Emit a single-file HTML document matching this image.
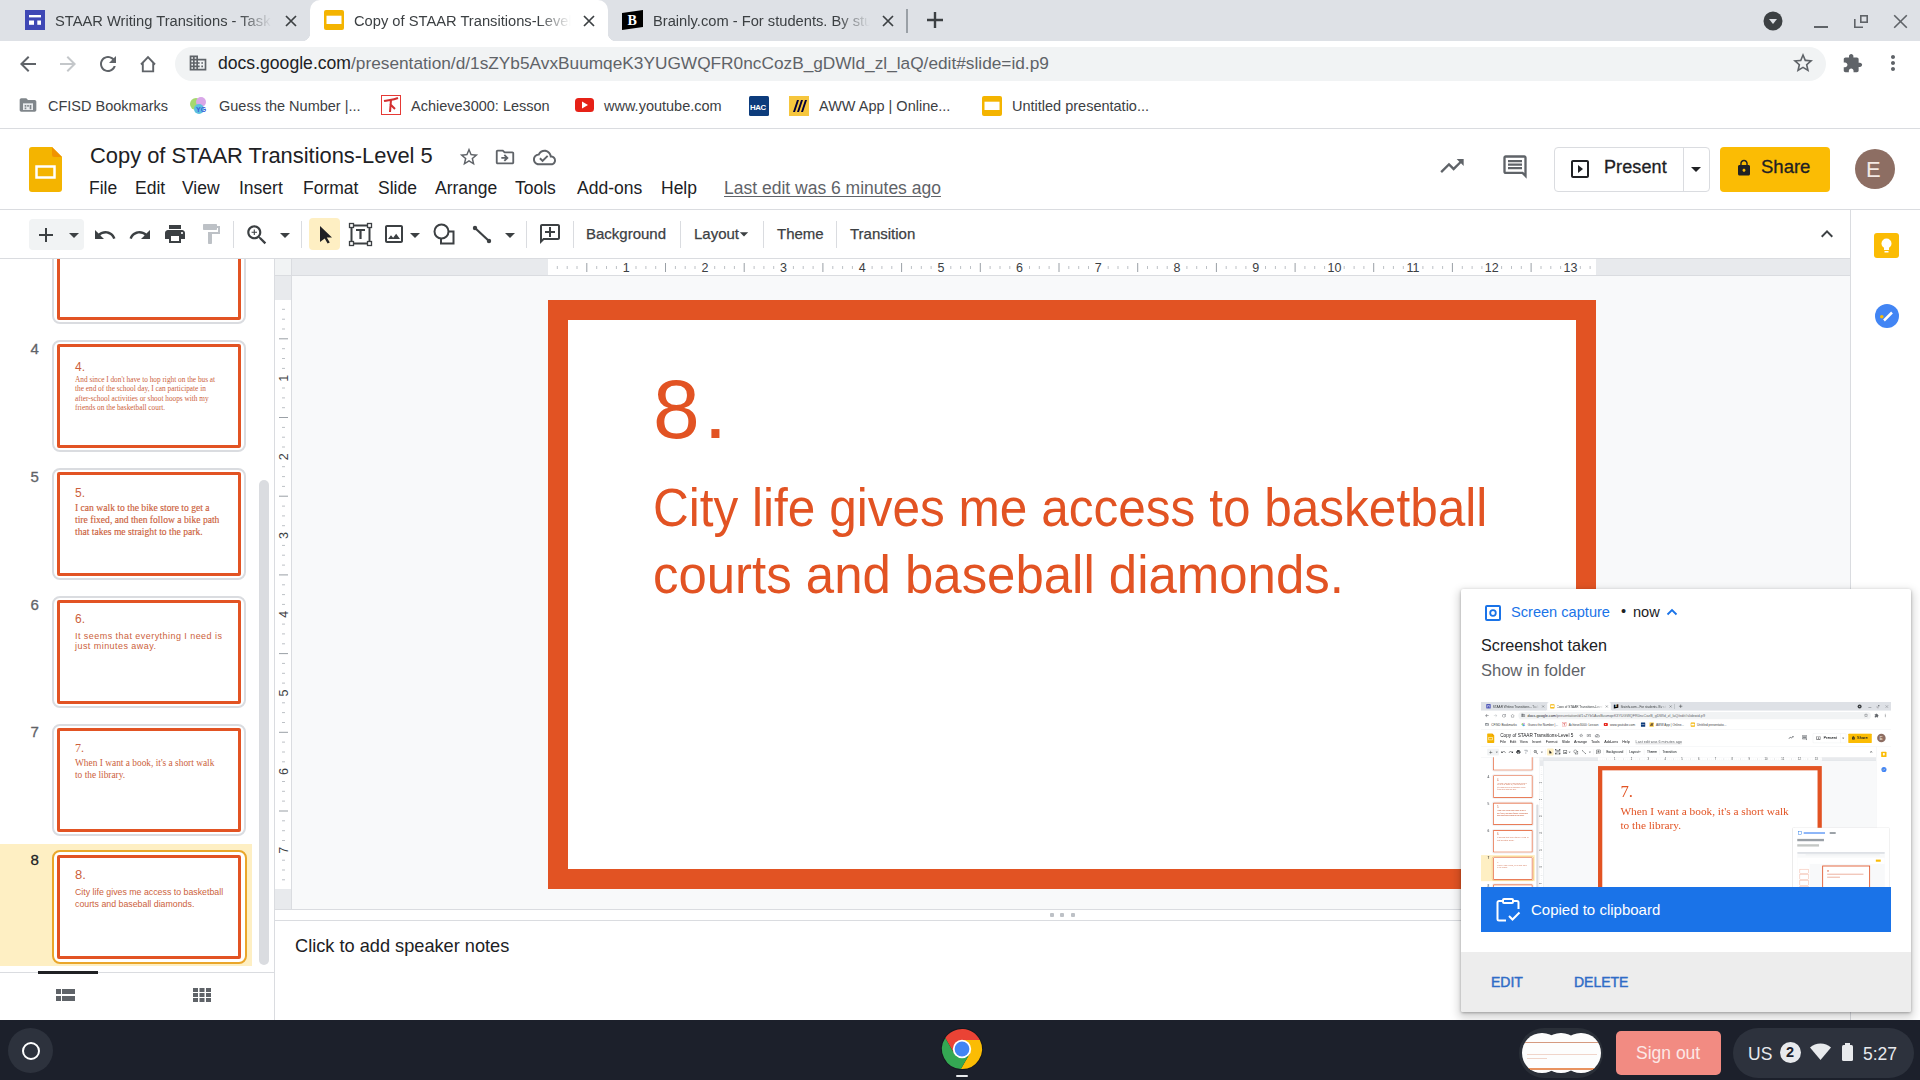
<!DOCTYPE html>
<html><head><meta charset="utf-8">
<style>
*{margin:0;padding:0;box-sizing:border-box}
html,body{width:1920px;height:1080px;overflow:hidden;background:#fff;font-family:"Liberation Sans",sans-serif;position:relative}
.a{position:absolute}
.t{position:absolute;white-space:nowrap;line-height:1}
svg{position:absolute;overflow:visible}
</style></head><body>

<!-- ===== Chrome tab strip ===== -->
<div class="a" style="left:0;top:0;width:1920px;height:41px;background:#dee1e6"></div>
<!-- active tab -->
<div class="a" style="left:310px;top:0;width:298px;height:41px;background:#fff;border-radius:10px 10px 0 0"></div>
<div class="a" style="left:302px;top:33px;width:8px;height:8px;background:radial-gradient(circle at 0 0,#dee1e6 8px,#fff 8.5px)"></div>
<div class="a" style="left:608px;top:33px;width:8px;height:8px;background:radial-gradient(circle at 100% 0,#dee1e6 8px,#fff 8.5px)"></div>

<!-- ===== Chrome toolbar ===== -->
<div class="a" style="left:0;top:41px;width:1920px;height:87px;background:#fff"></div>
<div class="a" style="left:175px;top:47px;width:1651px;height:34px;background:#f1f3f4;border-radius:17px"></div>
<div class="a" style="left:0;top:128px;width:1920px;height:1px;background:#dadce0"></div>
<!-- tab 1 -->
<svg style="left:25px;top:10px" width="20" height="20" viewBox="0 0 20 20"><rect width="20" height="20" fill="#3f48b5"/><rect x="4" y="5" width="12" height="2.4" fill="#fff"/><rect x="4" y="10.5" width="5" height="4.3" fill="#fff"/><rect x="12.3" y="10.5" width="3.7" height="4.3" fill="#fff"/></svg>
<div class="t" style="left:55px;top:14px;font-size:14.7px;color:#3c4043;width:217px;overflow:hidden;-webkit-mask-image:linear-gradient(90deg,#000 85%,transparent)">STAAR Writing Transitions - Task</div>
<svg style="left:284px;top:14px" width="14" height="14" viewBox="0 0 14 14"><path d="M2 2L12 12M12 2L2 12" stroke="#3c4043" stroke-width="1.7"/></svg>
<!-- tab 2 -->
<svg style="left:324px;top:10px" width="20" height="20" viewBox="0 0 20 20"><rect x="0" y="0" width="20" height="20" rx="2" fill="#f4b400"/><rect x="2.5" y="5.7" width="15" height="8.3" fill="#fff"/></svg>
<div class="t" style="left:354px;top:14px;font-size:14.7px;color:#3c4043;width:217px;overflow:hidden;-webkit-mask-image:linear-gradient(90deg,#000 85%,transparent)">Copy of STAAR Transitions-Level 5</div>
<svg style="left:582px;top:14px" width="14" height="14" viewBox="0 0 14 14"><path d="M2 2L12 12M12 2L2 12" stroke="#3c4043" stroke-width="1.7"/></svg>
<!-- tab 3 -->
<svg style="left:622px;top:10px" width="21" height="20" viewBox="0 0 21 20"><path d="M0 3L21 0V17L0 20Z" fill="#000"/><text x="5.5" y="15" font-family="Liberation Serif" font-weight="bold" font-size="14" fill="#fff">B</text></svg>
<div class="t" style="left:653px;top:14px;font-size:14.7px;color:#3c4043;width:217px;overflow:hidden;-webkit-mask-image:linear-gradient(90deg,#000 85%,transparent)">Brainly.com - For students. By students.</div>
<svg style="left:881px;top:14px" width="14" height="14" viewBox="0 0 14 14"><path d="M2 2L12 12M12 2L2 12" stroke="#3c4043" stroke-width="1.7"/></svg>
<div class="a" style="left:906px;top:9px;width:2px;height:24px;background:#9aa0a6"></div>
<svg style="left:925px;top:10px" width="20" height="20" viewBox="0 0 20 20"><path d="M10 2V18M2 10H18" stroke="#3c4043" stroke-width="2.4"/></svg>
<!-- window controls -->
<svg style="left:1763px;top:11px" width="20" height="20" viewBox="0 0 20 20"><circle cx="10" cy="10" r="9.5" fill="#3c4043"/><path d="M6 8H14L10 13Z" fill="#dee1e6"/></svg>
<div class="a" style="left:1813.5px;top:26px;width:14px;height:2px;background:#5f6368"></div>
<svg style="left:1852px;top:13px" width="18" height="18" viewBox="0 0 18 18"><rect x="8.8" y="2.8" width="6.4" height="6.4" fill="none" stroke="#5f6368" stroke-width="1.6"/><path d="M2.8 6V14.2H11" fill="none" stroke="#5f6368" stroke-width="1.6"/></svg>
<svg style="left:1893px;top:14px" width="15" height="15" viewBox="0 0 15 15"><path d="M1.2 1.2L13.8 13.8M13.8 1.2L1.2 13.8" stroke="#5f6368" stroke-width="1.6"/></svg>

<!-- nav buttons -->
<svg style="left:16px;top:52px" width="24" height="24" viewBox="0 0 24 24"><path fill="#5f6368" d="M20 11H7.83l5.59-5.59L12 4l-8 8 8 8 1.41-1.41L7.83 13H20v-2z"/></svg>
<svg style="left:56px;top:52px" width="24" height="24" viewBox="0 0 24 24"><path fill="#c4c7ca" d="M12 4l-1.41 1.41L16.17 11H4v2h12.17l-5.58 5.59L12 20l8-8z"/></svg>
<svg style="left:96px;top:52px" width="24" height="24" viewBox="0 0 24 24"><path fill="#5f6368" d="M17.65 6.35C16.2 4.9 14.21 4 12 4c-4.42 0-7.99 3.58-7.99 8s3.57 8 7.99 8c3.73 0 6.84-2.55 7.73-6h-2.08c-.82 2.33-3.04 4-5.65 4-3.31 0-6-2.69-6-6s2.69-6 6-6c1.66 0 3.14.69 4.22 1.78L13 11h7V4l-2.35 2.35z"/></svg>
<svg style="left:136px;top:52px" width="24" height="24" viewBox="0 0 24 24"><path d="M5 12.5L12 5.2L19 12.5M6.8 11V19.4H17.2V11" fill="none" stroke="#5f6368" stroke-width="1.9" stroke-linejoin="miter"/></svg>
<svg style="left:188px;top:53px" width="20" height="20" viewBox="0 0 24 24"><path fill="#5f6368" d="M12 7V3H2v18h20V7H12zM6 19H4v-2h2v2zm0-4H4v-2h2v2zm0-4H4V9h2v2zm0-4H4V5h2v2zm4 12H8v-2h2v2zm0-4H8v-2h2v2zm0-4H8V9h2v2zm0-4H8V5h2v2zm10 12h-8v-2h2v-2h-2v-2h2v-2h-2V9h8v10zm-2-8h-2v2h2v-2zm0 4h-2v2h2v-2z"/></svg>
<div class="t" style="left:218px;top:55px;font-size:17.6px;color:#5f6368"><span style="color:#202124">docs.google.com</span><span style="font-size:17.28px">/presentation/d/1sZYb5AvxBuumqeK3YUGWQFR0ncCozB_gDWld_zl_laQ/edit#slide=id.p9</span></div>
<svg style="left:1791px;top:51px" width="24" height="24" viewBox="0 0 24 24"><path fill="#5f6368" d="M22 9.24l-7.19-.62L12 2 9.19 8.63 2 9.24l5.46 4.73L5.82 21 12 17.27 18.18 21l-1.63-7.03L22 9.24zM12 15.4l-3.76 2.27 1-4.28-3.32-2.88 4.38-.38L12 6.1l1.71 4.04 4.38.38-3.32 2.88 1 4.28L12 15.4z"/></svg>
<svg style="left:1842px;top:53px" width="21" height="21" viewBox="0 0 24 24"><path fill="#5f6368" d="M20.5 11H19V7c0-1.1-.9-2-2-2h-4V3.5C13 2.12 11.88 1 10.5 1S8 2.12 8 3.5V5H4c-1.1 0-1.99.9-1.99 2v3.8H3.5c1.49 0 2.7 1.21 2.7 2.7s-1.21 2.7-2.7 2.7H2V20c0 1.1.9 2 2 2h3.8v-1.5c0-1.49 1.21-2.7 2.7-2.7 1.49 0 2.7 1.21 2.7 2.7V22H17c1.1 0 2-.9 2-2v-4h1.5c1.38 0 2.5-1.12 2.5-2.5S21.88 11 20.5 11z"/></svg>
<svg style="left:1881px;top:51px" width="24" height="24" viewBox="0 0 24 24"><path fill="#5f6368" d="M12 8c1.1 0 2-.9 2-2s-.9-2-2-2-2 .9-2 2 .9 2 2 2zm0 2c-1.1 0-2 .9-2 2s.9 2 2 2 2-.9 2-2-.9-2-2-2zm0 6c-1.1 0-2 .9-2 2s.9 2 2 2 2-.9 2-2-.9-2-2-2z"/></svg>

<!-- bookmarks -->
<svg style="left:18px;top:95px" width="20" height="20" viewBox="0 0 24 24"><path fill="#80868b" d="M10 4H4c-1.1 0-1.99.9-1.99 2L2 18c0 1.1.9 2 2 2h16c1.1 0 2-.9 2-2V8c0-1.1-.9-2-2-2h-8l-2-2z"/><rect x="6" y="10" width="12" height="8" fill="#e8eaed"/><path d="M8 12h2v2H8zM11 12h2v2h-2zM8 15h2v2H8zM14 12h2v5h-2z" fill="#80868b"/></svg>
<div class="t" style="left:48px;top:99px;font-size:14.5px;color:#3c4043">CFISD Bookmarks</div>
<svg style="left:188px;top:95px" width="22" height="20" viewBox="0 0 22 20"><circle cx="8" cy="9" r="6" fill="#a5d86e"/><circle cx="13" cy="7" r="5" fill="#d9a7e8"/><circle cx="11" cy="14" r="5" fill="#5bc0de"/><text x="8" y="17" font-size="7" font-weight="bold" fill="#3b5bdb" font-family="Liberation Sans">YG</text></svg>
<div class="t" style="left:219px;top:99px;font-size:14.5px;color:#3c4043">Guess the Number |...</div>
<svg style="left:381px;top:95px" width="20" height="20" viewBox="0 0 20 20"><rect x="0.5" y="0.5" width="19" height="19" fill="#fff" stroke="#e53935"/><path d="M3 6C7 5 12 5 17 3M10 5L9 17M9 9L14 14" stroke="#d32f2f" stroke-width="2" fill="none"/></svg>
<div class="t" style="left:411px;top:99px;font-size:14.5px;color:#3c4043">Achieve3000: Lesson</div>
<svg style="left:575px;top:98px" width="19" height="14" viewBox="0 0 19 14"><rect width="19" height="14" rx="3.5" fill="#e62117"/><path d="M7 3.5V10.5L13 7Z" fill="#fff"/></svg>
<div class="t" style="left:604px;top:99px;font-size:14.5px;color:#3c4043">www.youtube.com</div>
<svg style="left:749px;top:96px" width="20" height="20" viewBox="0 0 20 20"><rect width="20" height="20" rx="1.5" fill="#0d3c7c"/><text x="1" y="13.5" font-size="7.8" font-weight="bold" fill="#fff" font-family="Liberation Sans" letter-spacing="-0.4">HAC</text></svg>
<svg style="left:789px;top:96px" width="20" height="20" viewBox="0 0 20 20"><rect width="20" height="20" fill="#f6c63d"/><path d="M4 16L8 4H10L6 16ZM8 16L12 4H14L10 16ZM12 16L16 4H18L14 16Z" fill="#050038"/></svg>
<div class="t" style="left:819px;top:99px;font-size:14.5px;color:#3c4043">AWW App | Online...</div>
<svg style="left:982px;top:96px" width="20" height="20" viewBox="0 0 20 20"><rect x="0" y="0" width="20" height="20" rx="2" fill="#f4b400"/><rect x="2.5" y="5.7" width="15" height="8.3" fill="#fff"/></svg>
<div class="t" style="left:1012px;top:99px;font-size:14.5px;color:#3c4043">Untitled presentatio...</div>


<!-- ===== Docs header ===== -->
<div class="a" style="left:0;top:209px;width:1920px;height:1px;background:#dadce0"></div>

<!-- logo -->
<svg style="left:29px;top:147px" width="33" height="45" viewBox="0 0 33 45"><path d="M3 0H23L33 10V42a3 3 0 0 1-3 3H3a3 3 0 0 1-3-3V3a3 3 0 0 1 3-3Z" fill="#f4b400"/><path d="M23 0L33 10H25a2 2 0 0 1-2-2Z" fill="#f09300"/><rect x="7.5" y="19.5" width="18" height="11" fill="none" stroke="#fff" stroke-width="2.5"/></svg>
<div class="t" style="left:90px;top:145px;font-size:21.9px;color:#202124">Copy of STAAR Transitions-Level 5</div>
<svg style="left:458px;top:146px" width="22" height="22" viewBox="0 0 24 24"><path fill="#5f6368" d="M22 9.24l-7.19-.62L12 2 9.19 8.63 2 9.24l5.46 4.73L5.82 21 12 17.27 18.18 21l-1.63-7.03L22 9.24zM12 15.4l-3.76 2.27 1-4.28-3.32-2.88 4.38-.38L12 6.1l1.71 4.04 4.38.38-3.32 2.88 1 4.28L12 15.4z"/></svg>
<svg style="left:494px;top:146px" width="22" height="22" viewBox="0 0 24 24"><path fill="#5f6368" d="M20 6h-8l-2-2H4c-1.1 0-1.99.9-1.99 2L2 18c0 1.1.9 2 2 2h16c1.1 0 2-.9 2-2V8c0-1.1-.9-2-2-2zm0 12H4V6h5.17l2 2H20v10zm-7.84-6H8v2h4.16l-1.59 1.59L11.99 17 16 13.01 11.99 9l-1.41 1.41L12.16 12z"/></svg>
<svg style="left:533px;top:146px" width="23" height="23" viewBox="0 0 24 24"><path fill="#5f6368" d="M19.35 10.04C18.67 6.59 15.64 4 12 4 9.110 4 6.6 5.64 5.35 8.04 2.34 8.36 0 10.91 0 14c0 3.31 2.69 6 6 6h13c2.76 0 5-2.24 5-5 0-2.64-2.050-4.78-4.65-4.96zM19 18H6c-2.21 0-4-1.79-4-4 0-2.05 1.53-3.760 3.56-3.97l1.07-.11.5-.95C8.08 7.14 9.94 6 12 6c2.62 0 4.88 1.86 5.39 4.43l.3 1.5 1.53.11c1.56.1 2.78 1.41 2.78 2.96 0 1.65-1.35 3-3 3zm-9-3.82l-2.09-2.09L6.5 13.5 10 17l6.01-6.01-1.41-1.41z"/></svg>
<div class="t" style="left:89px;top:180px;font-size:17.5px;color:#202124">File</div>
<div class="t" style="left:135px;top:180px;font-size:17.5px;color:#202124">Edit</div>
<div class="t" style="left:182px;top:180px;font-size:17.5px;color:#202124">View</div>
<div class="t" style="left:239px;top:180px;font-size:17.5px;color:#202124">Insert</div>
<div class="t" style="left:303px;top:180px;font-size:17.5px;color:#202124">Format</div>
<div class="t" style="left:378px;top:180px;font-size:17.5px;color:#202124">Slide</div>
<div class="t" style="left:435px;top:180px;font-size:17.5px;color:#202124">Arrange</div>
<div class="t" style="left:515px;top:180px;font-size:17.5px;color:#202124">Tools</div>
<div class="t" style="left:577px;top:180px;font-size:17.5px;color:#202124">Add-ons</div>
<div class="t" style="left:661px;top:180px;font-size:17.5px;color:#202124">Help</div>
<div class="t" style="left:724px;top:180px;font-size:17.5px;color:#5f6368;text-decoration:underline;text-underline-offset:1.5px">Last edit was 6 minutes ago</div>
<!-- right header -->
<svg style="left:1438px;top:152px" width="28" height="28" viewBox="0 0 24 24"><path fill="#5f6368" d="M16 6l2.29 2.29-4.88 4.88-4-4L2 16.59 3.41 18l6-6 4 4 6.3-6.29L22 12V6z"/></svg>
<svg style="left:1501px;top:153px" width="28" height="28" viewBox="0 0 24 24"><path fill="#5f6368" d="M21.99 4c0-1.1-.89-2-1.99-2H4c-1.1 0-2 .9-2 2v12c0 1.1.9 2 2 2h14l4 4-.01-18zM20 4v13.170L18.83 16H4V4h16zM6 12h12v2H6zm0-3h12v2H6zm0-3h12v2H6z"/></svg>
<div class="a" style="left:1554px;top:147px;width:156px;height:45px;border:1px solid #dadce0;border-radius:4px;background:#fff"></div>
<div class="a" style="left:1683px;top:148px;width:1px;height:43px;background:#dadce0"></div>
<svg style="left:1568px;top:157px" width="24" height="24" viewBox="0 0 24 24"><path fill="#202124" d="M10 8v8l5-4-5-4zm9-5H5c-1.1 0-2 .9-2 2v14c0 1.1.9 2 2 2h14c1.1 0 2-.9 2-2V5c0-1.1-.9-2-2-2zm0 16H5V5h14v14z"/></svg>
<div class="t" style="left:1604px;top:158px;font-size:18px;color:#202124;letter-spacing:0.1px;-webkit-text-stroke:0.3px #202124">Present</div>
<svg style="left:1684px;top:157px" width="24" height="24" viewBox="0 0 24 24"><path fill="#202124" d="M7 10l5 5 5-5z"/></svg>
<div class="a" style="left:1720px;top:147px;width:110px;height:45px;background:#fbbc04;border-radius:4px"></div>
<svg style="left:1735px;top:159px" width="18" height="18" viewBox="0 0 24 24"><path fill="#202124" d="M18 8h-1V6c0-2.76-2.24-5-5-5S7 3.24 7 6v2H6c-1.1 0-2 .9-2 2v10c0 1.1.9 2 2 2h12c1.100 0 2-.9 2-2V10c0-1.1-.9-2-2-2zm-6 9c-1.1 0-2-.9-2-2s.9-2 2-2 2 .9 2 2-.9 2-2 2zm3.1-9H8.9V6c0-1.71 1.39-3.1 3.1-3.1 1.71 0 3.1 1.39 3.1 3.1v2z"/></svg>
<div class="t" style="left:1761px;top:158px;font-size:18.5px;color:#202124;-webkit-text-stroke:0.3px #202124">Share</div>
<div class="a" style="left:1855px;top:149px;width:40px;height:40px;border-radius:50%;background:#8d6e63"></div>
<div class="t" style="left:1866px;top:159px;font-size:22px;color:#f3e9e4">E</div>

<!-- ===== Docs toolbar ===== -->
<div class="a" style="left:29px;top:219px;width:55px;height:31px;background:#f1f3f4;border-radius:4px"></div>
<svg style="left:34px;top:223px" width="24" height="24" viewBox="0 0 24 24"><path fill="#3c4043" d="M19 13h-6v6h-2v-6H5v-2h6V5h2v6h6v2z"/></svg>
<svg style="left:62px;top:223px" width="24" height="24" viewBox="0 0 24 24"><path fill="#3c4043" d="M7 10l5 5 5-5z"/></svg>
<svg style="left:93px;top:223px" width="24" height="24" viewBox="0 0 24 24"><path fill="#3c4043" d="M12.5 8c-2.65 0-5.05.99-6.9 2.6L2 7v9h9l-3.62-3.62c1.39-1.16 3.16-1.88 5.12-1.88 3.54 0 6.55 2.31 7.6 5.5l2.37-.78C21.08 11.03 17.15 8 12.5 8z"/></svg>
<svg style="left:128px;top:223px" width="24" height="24" viewBox="0 0 24 24"><path fill="#3c4043" d="M18.4 10.6C16.55 8.99 14.15 8 11.5 8c-4.65 0-8.58 3.03-9.96 7.22L3.9 16c1.05-3.19 4.05-5.5 7.6-5.5 1.95 0 3.73.72 5.12 1.880L13 16h9V7l-3.6 3.6z"/></svg>
<svg style="left:163px;top:222px" width="24" height="24" viewBox="0 0 24 24"><path fill="#3c4043" d="M19 8H5c-1.66 0-3 1.34-3 3v6h4v4h12v-4h4v-6c0-1.66-1.34-3-3-3zm-3 11H8v-5h8v5zm3-7c-.55 0-1-.45-1-1s.45-1 1-1 1 .45 1 1-.45 1-1 1zm-1-9H6v4h12V3z"/></svg>
<svg style="left:199px;top:222px" width="24" height="24" viewBox="0 0 24 24"><path fill="#bdc1c6" d="M18 4V3c0-.55-.45-1-1-1H5c-.55 0-1 .45-1 1v4c0 .55.45 1 1 1h12c.55 0 1-.45 1-1V6h1v4H9v11c0 .55.45 1 1 1h2c.55 0 1-.45 1-1v-9h8V4h-3z"/></svg>
<div class="a" style="left:233px;top:221px;width:1px;height:27px;background:#dadce0"></div>
<svg style="left:244px;top:222px" width="26" height="26" viewBox="0 0 24 24"><path fill="#3c4043" d="M15.5 14h-.79l-.28-.27C15.41 12.59 16 11.11 16 9.5 16 5.91 13.09 3 9.5 3S3 5.910 3 9.5 5.91 16 9.5 16c1.61 0 3.09-.59 4.23-1.57l.27.28v.79l5 4.99L20.49 19l-4.99-5zm-6 0C7.01 14 5 11.99 5 9.5S7.01 5 9.5 5 14 7.01 14 9.5 11.99 14 9.5 14zm2.5-4h-2v2H9v-2H7V9h2V7h1v2h2v1z"/></svg>
<svg style="left:273px;top:223px" width="24" height="24" viewBox="0 0 24 24"><path fill="#3c4043" d="M7 10l5 5 5-5z"/></svg>
<div class="a" style="left:301px;top:221px;width:1px;height:27px;background:#dadce0"></div>
<div class="a" style="left:309px;top:218px;width:31px;height:32px;background:#feefc3;border-radius:4px"></div>
<svg style="left:318px;top:225px" width="16" height="19" viewBox="0 0 16 19"><path d="M2 1L14 12.5H8.8L11.8 17.5L9.6 18.6L6.7 13.5L2 17Z" fill="#202124"/></svg>
<svg style="left:349px;top:223px" width="23" height="23" viewBox="0 0 23 23"><rect x="2.5" y="2.5" width="18" height="18" fill="none" stroke="#3c4043" stroke-width="2"/><rect x="0.5" y="0.5" width="4" height="4" fill="#fff" stroke="#3c4043" stroke-width="1.3"/><rect x="18.5" y="0.5" width="4" height="4" fill="#fff" stroke="#3c4043" stroke-width="1.3"/><rect x="0.5" y="18.5" width="4" height="4" fill="#fff" stroke="#3c4043" stroke-width="1.3"/><rect x="18.5" y="18.5" width="4" height="4" fill="#fff" stroke="#3c4043" stroke-width="1.3"/><path d="M7 7H16M11.5 7V16" stroke="#3c4043" stroke-width="2.2"/></svg>
<svg style="left:382px;top:222px" width="24" height="24" viewBox="0 0 24 24"><path fill="#3c4043" d="M19 5v14H5V5h14m0-2H5c-1.1 0-2 .9-2 2v14c0 1.1.9 2 2 2h14c1.1 0 2-.9 2-2V5c0-1.1-.9-2-2-2zm-4.86 8.86l-3 3.87L9 13.14 6 17h12l-3.86-5.14z"/></svg>
<svg style="left:403px;top:223px" width="24" height="24" viewBox="0 0 24 24"><path fill="#3c4043" d="M7 10l5 5 5-5z"/></svg>
<svg style="left:433px;top:223px" width="22" height="22" viewBox="0 0 22 22"><rect x="8" y="8.5" width="12.5" height="12" fill="none" stroke="#3c4043" stroke-width="2"/><circle cx="8.5" cy="8.5" r="7" fill="#fff" stroke="#3c4043" stroke-width="2"/></svg>
<svg style="left:472px;top:225px" width="20" height="19" viewBox="0 0 20 19"><path d="M3 3L17 16" stroke="#3c4043" stroke-width="2.2"/><circle cx="3" cy="3" r="2.2" fill="#3c4043"/><circle cx="17" cy="16" r="2.2" fill="#3c4043"/></svg>
<svg style="left:498px;top:223px" width="24" height="24" viewBox="0 0 24 24"><path fill="#3c4043" d="M7 10l5 5 5-5z"/></svg>
<div class="a" style="left:526px;top:221px;width:1px;height:27px;background:#dadce0"></div>
<svg style="left:538px;top:222px" width="24" height="24" viewBox="0 0 24 24"><path fill="#3c4043" d="M22 4c0-1.1-.9-2-2-2H4c-1.1 0-1.99.9-1.99 2L2 16c0 1.1.9 2 2 2h14l4 4V4zm-2 13.17L18.83 16H4V4h16v13.17zM13 5h-2v4H7v2h4v4h2v-4h4V9h-4z" transform="translate(24,0) scale(-1,1)"/></svg>
<div class="a" style="left:573px;top:221px;width:1px;height:27px;background:#dadce0"></div>
<div class="t" style="left:586px;top:226px;font-size:15px;color:#3c4043;-webkit-text-stroke:0.25px #3c4043">Background</div>
<div class="a" style="left:680px;top:221px;width:1px;height:27px;background:#dadce0"></div>
<div class="t" style="left:694px;top:226px;font-size:15px;color:#3c4043;-webkit-text-stroke:0.25px #3c4043">Layout</div>
<svg style="left:734px;top:224px" width="20" height="20" viewBox="0 0 24 24"><path fill="#3c4043" d="M7 10l5 5 5-5z"/></svg>
<div class="a" style="left:763px;top:221px;width:1px;height:27px;background:#dadce0"></div>
<div class="t" style="left:777px;top:226px;font-size:15px;color:#3c4043;-webkit-text-stroke:0.25px #3c4043">Theme</div>
<div class="a" style="left:836px;top:221px;width:1px;height:27px;background:#dadce0"></div>
<div class="t" style="left:850px;top:226px;font-size:15px;color:#3c4043;-webkit-text-stroke:0.25px #3c4043">Transition</div>
<svg style="left:1815px;top:222px" width="24" height="24" viewBox="0 0 24 24"><path fill="#3c4043" d="M12 8l-6 6 1.41 1.41L12 10.83l4.59 4.58L18 14z"/></svg>
<div class="a" style="left:0;top:258px;width:1850px;height:1px;background:#dadce0"></div>

<!-- ===== Filmstrip ===== -->
<div class="a" style="left:0;top:259px;width:274px;height:761px;overflow:hidden"><div class="a" style="left:0;top:-259px;width:274px;height:1080px"><div class="a" style="left:0;top:844.3px;width:252px;height:122px;background:#feefc3"></div>
<div class="a" style="left:52px;top:212px;width:194px;height:112px;border:2px solid #dadce0;border-radius:8px;background:#fff"></div>
<div class="a" style="left:57px;top:216px;width:184px;height:104px;border:3.5px solid #e25323;border-radius:2px;background:#fff"></div>
<div class="a" style="left:52px;top:340px;width:194px;height:112px;border:2px solid #dadce0;border-radius:8px;background:#fff"></div>
<div class="a" style="left:57px;top:344px;width:184px;height:104px;border:3.5px solid #e25323;border-radius:2px;background:#fff"></div>
<div class="t" style="left:30.5px;top:340.5px;font-size:15px;color:#5f6368;-webkit-text-stroke:0.3px #5f6368">4</div>
<div class="a" style="left:52px;top:468px;width:194px;height:112px;border:2px solid #dadce0;border-radius:8px;background:#fff"></div>
<div class="a" style="left:57px;top:472px;width:184px;height:104px;border:3.5px solid #e25323;border-radius:2px;background:#fff"></div>
<div class="t" style="left:30.5px;top:468.5px;font-size:15px;color:#5f6368;-webkit-text-stroke:0.3px #5f6368">5</div>
<div class="a" style="left:52px;top:596px;width:194px;height:112px;border:2px solid #dadce0;border-radius:8px;background:#fff"></div>
<div class="a" style="left:57px;top:600px;width:184px;height:104px;border:3.5px solid #e25323;border-radius:2px;background:#fff"></div>
<div class="t" style="left:30.5px;top:596.5px;font-size:15px;color:#5f6368;-webkit-text-stroke:0.3px #5f6368">6</div>
<div class="a" style="left:52px;top:723.5px;width:194px;height:112px;border:2px solid #dadce0;border-radius:8px;background:#fff"></div>
<div class="a" style="left:57px;top:727.5px;width:184px;height:104px;border:3.5px solid #e25323;border-radius:2px;background:#fff"></div>
<div class="t" style="left:30.5px;top:724.0px;font-size:15px;color:#5f6368;-webkit-text-stroke:0.3px #5f6368">7</div>
<div class="a" style="left:51.5px;top:850.3px;width:195px;height:114px;border:2px solid #eaa62a;border-radius:8px;background:#fff"></div>
<div class="a" style="left:57px;top:855.3px;width:184px;height:104px;border:3.5px solid #e25323;border-radius:2px;background:#fff"></div>
<div class="t" style="left:30.5px;top:851.8px;font-size:15px;color:#202124;-webkit-text-stroke:0.3px #202124">8</div>
<div class="t" style="left:75px;top:361px;font-size:12px;color:#cc5f3c;font-family:'Liberation Sans'">4.</div>
<div class="t" style="left:75px;top:375px;font-size:7.3px;line-height:9.4px;color:#cc5f3c;font-family:'Liberation Serif'">And since I don't have to hop right on the bus at<br>the end of the school day, I can participate in<br>after-school activities or shoot hoops with my<br>friends on the basketball court.</div>
<div class="t" style="left:75px;top:487px;font-size:12px;color:#cc5f3c">5.</div>
<div class="t" style="left:75px;top:502px;font-size:9.6px;line-height:12px;color:#cc5f3c;font-family:'Liberation Serif';-webkit-text-stroke:0.15px #cc5f3c">I can walk to the bike store to get a<br>tire fixed, and then follow a bike path<br>that takes me straight to the park.</div>
<div class="t" style="left:75px;top:613px;font-size:12px;color:#cc5f3c">6.</div>
<div class="t" style="left:75px;top:632px;font-size:9px;line-height:9.5px;color:#cc5f3c;letter-spacing:0.45px">It seems that everything I need is<br>just minutes away.</div>
<div class="t" style="left:75px;top:742px;font-size:12px;color:#cc5f3c;font-family:'Liberation Serif'">7.</div>
<div class="t" style="left:75px;top:757px;font-size:9.4px;line-height:12.4px;color:#cc5f3c;font-family:'Liberation Serif'">When I want a book, it's a short walk<br>to the library.</div>
<div class="t" style="left:75px;top:868px;font-size:13px;color:#cc5f3c">8.</div>
<div class="t" style="left:75px;top:886px;font-size:8.8px;line-height:12.3px;color:#cc5f3c">City life gives me access to basketball<br>courts and baseball diamonds.</div>
<div class="a" style="left:259px;top:480px;width:10px;height:485px;background:#dadce0;border-radius:5px"></div>
<div class="a" style="left:0;top:972px;width:274px;height:48px;background:#fff;border-top:1px solid #dadce0"></div>
<div class="a" style="left:38px;top:971px;width:60px;height:3px;background:#202124"></div>
<svg style="left:55px;top:986px" width="21" height="18" viewBox="0 0 21 18"><rect x="1" y="3" width="5" height="5" fill="#5f6368"/><rect x="7" y="3" width="13" height="5" fill="#5f6368"/><rect x="1" y="10" width="5" height="5" fill="#5f6368"/><rect x="7" y="10" width="13" height="5" fill="#5f6368"/></svg>
<svg style="left:192px;top:986px" width="20" height="18" viewBox="0 0 20 18"><g fill="#5f6368"><rect x="1" y="2" width="5" height="4"/><rect x="7.5" y="2" width="5" height="4"/><rect x="14" y="2" width="5" height="4"/><rect x="1" y="7" width="5" height="4"/><rect x="7.5" y="7" width="5" height="4"/><rect x="14" y="7" width="5" height="4"/><rect x="1" y="12" width="5" height="4"/><rect x="7.5" y="12" width="5" height="4"/><rect x="14" y="12" width="5" height="4"/></g></svg></div></div>

<div class="a" style="left:274px;top:259px;width:1px;height:761px;background:#dadce0"></div>


<!-- ===== Canvas ===== -->
<div class="a" style="left:275px;top:259px;width:1575px;height:650px;background:#f8f9fa"></div>
<div class="a" style="left:275px;top:259px;width:1575px;height:17px;background:#e8eaed;border-bottom:1px solid #dadce0"></div>
<div class="a" style="left:548px;top:259px;width:1048px;height:17px;background:#fff;border-bottom:1px solid #dadce0"></div>
<div class="a" style="left:275px;top:276px;width:17px;height:633px;background:#e8eaed;border-right:1px solid #dadce0"></div>
<div class="a" style="left:275px;top:300px;width:17px;height:589px;background:#fff;border-right:1px solid #dadce0"></div>
<div class="a" style="left:275px;top:259px;width:17px;height:17px;background:#f1f3f4;border-right:1px solid #dadce0;border-bottom:1px solid #dadce0"></div>
<svg style="left:0;top:0" width="1920" height="1080">
<rect x="556.8" y="266" width="1" height="3" fill="#bdc1c6"/>
<rect x="566.7" y="266" width="1" height="3" fill="#bdc1c6"/>
<rect x="576.5" y="266" width="1" height="3" fill="#bdc1c6"/>
<rect x="586.3" y="263" width="1" height="9" fill="#9aa0a6"/>
<rect x="596.2" y="266" width="1" height="3" fill="#bdc1c6"/>
<rect x="606.0" y="266" width="1" height="3" fill="#bdc1c6"/>
<rect x="615.9" y="266" width="1" height="3" fill="#bdc1c6"/>
<text x="626.2" y="271.5" font-size="12.5" fill="#3c4043" text-anchor="middle" font-family="Liberation Sans">1</text>
<rect x="635.5" y="266" width="1" height="3" fill="#bdc1c6"/>
<rect x="645.4" y="266" width="1" height="3" fill="#bdc1c6"/>
<rect x="655.2" y="266" width="1" height="3" fill="#bdc1c6"/>
<rect x="665.0" y="263" width="1" height="9" fill="#9aa0a6"/>
<rect x="674.9" y="266" width="1" height="3" fill="#bdc1c6"/>
<rect x="684.7" y="266" width="1" height="3" fill="#bdc1c6"/>
<rect x="694.5" y="266" width="1" height="3" fill="#bdc1c6"/>
<text x="704.9" y="271.5" font-size="12.5" fill="#3c4043" text-anchor="middle" font-family="Liberation Sans">2</text>
<rect x="714.2" y="266" width="1" height="3" fill="#bdc1c6"/>
<rect x="724.1" y="266" width="1" height="3" fill="#bdc1c6"/>
<rect x="733.9" y="266" width="1" height="3" fill="#bdc1c6"/>
<rect x="743.7" y="263" width="1" height="9" fill="#9aa0a6"/>
<rect x="753.6" y="266" width="1" height="3" fill="#bdc1c6"/>
<rect x="763.4" y="266" width="1" height="3" fill="#bdc1c6"/>
<rect x="773.2" y="266" width="1" height="3" fill="#bdc1c6"/>
<text x="783.6" y="271.5" font-size="12.5" fill="#3c4043" text-anchor="middle" font-family="Liberation Sans">3</text>
<rect x="792.9" y="266" width="1" height="3" fill="#bdc1c6"/>
<rect x="802.7" y="266" width="1" height="3" fill="#bdc1c6"/>
<rect x="812.6" y="266" width="1" height="3" fill="#bdc1c6"/>
<rect x="822.4" y="263" width="1" height="9" fill="#9aa0a6"/>
<rect x="832.3" y="266" width="1" height="3" fill="#bdc1c6"/>
<rect x="842.1" y="266" width="1" height="3" fill="#bdc1c6"/>
<rect x="851.9" y="266" width="1" height="3" fill="#bdc1c6"/>
<text x="862.3" y="271.5" font-size="12.5" fill="#3c4043" text-anchor="middle" font-family="Liberation Sans">4</text>
<rect x="871.6" y="266" width="1" height="3" fill="#bdc1c6"/>
<rect x="881.4" y="266" width="1" height="3" fill="#bdc1c6"/>
<rect x="891.3" y="266" width="1" height="3" fill="#bdc1c6"/>
<rect x="901.1" y="263" width="1" height="9" fill="#9aa0a6"/>
<rect x="910.9" y="266" width="1" height="3" fill="#bdc1c6"/>
<rect x="920.8" y="266" width="1" height="3" fill="#bdc1c6"/>
<rect x="930.6" y="266" width="1" height="3" fill="#bdc1c6"/>
<text x="941.0" y="271.5" font-size="12.5" fill="#3c4043" text-anchor="middle" font-family="Liberation Sans">5</text>
<rect x="950.3" y="266" width="1" height="3" fill="#bdc1c6"/>
<rect x="960.1" y="266" width="1" height="3" fill="#bdc1c6"/>
<rect x="970.0" y="266" width="1" height="3" fill="#bdc1c6"/>
<rect x="979.8" y="263" width="1" height="9" fill="#9aa0a6"/>
<rect x="989.6" y="266" width="1" height="3" fill="#bdc1c6"/>
<rect x="999.5" y="266" width="1" height="3" fill="#bdc1c6"/>
<rect x="1009.3" y="266" width="1" height="3" fill="#bdc1c6"/>
<text x="1019.6" y="271.5" font-size="12.5" fill="#3c4043" text-anchor="middle" font-family="Liberation Sans">6</text>
<rect x="1029.0" y="266" width="1" height="3" fill="#bdc1c6"/>
<rect x="1038.8" y="266" width="1" height="3" fill="#bdc1c6"/>
<rect x="1048.6" y="266" width="1" height="3" fill="#bdc1c6"/>
<rect x="1058.5" y="263" width="1" height="9" fill="#9aa0a6"/>
<rect x="1068.3" y="266" width="1" height="3" fill="#bdc1c6"/>
<rect x="1078.2" y="266" width="1" height="3" fill="#bdc1c6"/>
<rect x="1088.0" y="266" width="1" height="3" fill="#bdc1c6"/>
<text x="1098.3" y="271.5" font-size="12.5" fill="#3c4043" text-anchor="middle" font-family="Liberation Sans">7</text>
<rect x="1107.7" y="266" width="1" height="3" fill="#bdc1c6"/>
<rect x="1117.5" y="266" width="1" height="3" fill="#bdc1c6"/>
<rect x="1127.3" y="266" width="1" height="3" fill="#bdc1c6"/>
<rect x="1137.2" y="263" width="1" height="9" fill="#9aa0a6"/>
<rect x="1147.0" y="266" width="1" height="3" fill="#bdc1c6"/>
<rect x="1156.8" y="266" width="1" height="3" fill="#bdc1c6"/>
<rect x="1166.7" y="266" width="1" height="3" fill="#bdc1c6"/>
<text x="1177.0" y="271.5" font-size="12.5" fill="#3c4043" text-anchor="middle" font-family="Liberation Sans">8</text>
<rect x="1186.4" y="266" width="1" height="3" fill="#bdc1c6"/>
<rect x="1196.2" y="266" width="1" height="3" fill="#bdc1c6"/>
<rect x="1206.0" y="266" width="1" height="3" fill="#bdc1c6"/>
<rect x="1215.9" y="263" width="1" height="9" fill="#9aa0a6"/>
<rect x="1225.7" y="266" width="1" height="3" fill="#bdc1c6"/>
<rect x="1235.5" y="266" width="1" height="3" fill="#bdc1c6"/>
<rect x="1245.4" y="266" width="1" height="3" fill="#bdc1c6"/>
<text x="1255.7" y="271.5" font-size="12.5" fill="#3c4043" text-anchor="middle" font-family="Liberation Sans">9</text>
<rect x="1265.0" y="266" width="1" height="3" fill="#bdc1c6"/>
<rect x="1274.9" y="266" width="1" height="3" fill="#bdc1c6"/>
<rect x="1284.7" y="266" width="1" height="3" fill="#bdc1c6"/>
<rect x="1294.6" y="263" width="1" height="9" fill="#9aa0a6"/>
<rect x="1304.4" y="266" width="1" height="3" fill="#bdc1c6"/>
<rect x="1314.2" y="266" width="1" height="3" fill="#bdc1c6"/>
<rect x="1324.1" y="266" width="1" height="3" fill="#bdc1c6"/>
<text x="1334.4" y="271.5" font-size="12.5" fill="#3c4043" text-anchor="middle" font-family="Liberation Sans">10</text>
<rect x="1343.7" y="266" width="1" height="3" fill="#bdc1c6"/>
<rect x="1353.6" y="266" width="1" height="3" fill="#bdc1c6"/>
<rect x="1363.4" y="266" width="1" height="3" fill="#bdc1c6"/>
<rect x="1373.2" y="263" width="1" height="9" fill="#9aa0a6"/>
<rect x="1383.1" y="266" width="1" height="3" fill="#bdc1c6"/>
<rect x="1392.9" y="266" width="1" height="3" fill="#bdc1c6"/>
<rect x="1402.8" y="266" width="1" height="3" fill="#bdc1c6"/>
<text x="1413.1" y="271.5" font-size="12.5" fill="#3c4043" text-anchor="middle" font-family="Liberation Sans">11</text>
<rect x="1422.4" y="266" width="1" height="3" fill="#bdc1c6"/>
<rect x="1432.3" y="266" width="1" height="3" fill="#bdc1c6"/>
<rect x="1442.1" y="266" width="1" height="3" fill="#bdc1c6"/>
<rect x="1451.9" y="263" width="1" height="9" fill="#9aa0a6"/>
<rect x="1461.8" y="266" width="1" height="3" fill="#bdc1c6"/>
<rect x="1471.6" y="266" width="1" height="3" fill="#bdc1c6"/>
<rect x="1481.4" y="266" width="1" height="3" fill="#bdc1c6"/>
<text x="1491.8" y="271.5" font-size="12.5" fill="#3c4043" text-anchor="middle" font-family="Liberation Sans">12</text>
<rect x="1501.1" y="266" width="1" height="3" fill="#bdc1c6"/>
<rect x="1511.0" y="266" width="1" height="3" fill="#bdc1c6"/>
<rect x="1520.8" y="266" width="1" height="3" fill="#bdc1c6"/>
<rect x="1530.6" y="263" width="1" height="9" fill="#9aa0a6"/>
<rect x="1540.5" y="266" width="1" height="3" fill="#bdc1c6"/>
<rect x="1550.3" y="266" width="1" height="3" fill="#bdc1c6"/>
<rect x="1560.1" y="266" width="1" height="3" fill="#bdc1c6"/>
<text x="1570.5" y="271.5" font-size="12.5" fill="#3c4043" text-anchor="middle" font-family="Liberation Sans">13</text>
<rect x="1579.8" y="266" width="1" height="3" fill="#bdc1c6"/>
<rect x="1589.6" y="266" width="1" height="3" fill="#bdc1c6"/>
<rect x="282" y="308.8" width="3" height="1" fill="#bdc1c6"/>
<rect x="282" y="318.7" width="3" height="1" fill="#bdc1c6"/>
<rect x="282" y="328.5" width="3" height="1" fill="#bdc1c6"/>
<rect x="279" y="338.3" width="9" height="1" fill="#9aa0a6"/>
<rect x="282" y="348.2" width="3" height="1" fill="#bdc1c6"/>
<rect x="282" y="358.0" width="3" height="1" fill="#bdc1c6"/>
<rect x="282" y="367.9" width="3" height="1" fill="#bdc1c6"/>
<text x="0" y="0" font-size="12.5" fill="#3c4043" text-anchor="middle" font-family="Liberation Sans" transform="translate(287.5,378.2) rotate(-90)">1</text>
<rect x="282" y="387.5" width="3" height="1" fill="#bdc1c6"/>
<rect x="282" y="397.4" width="3" height="1" fill="#bdc1c6"/>
<rect x="282" y="407.2" width="3" height="1" fill="#bdc1c6"/>
<rect x="279" y="417.0" width="9" height="1" fill="#9aa0a6"/>
<rect x="282" y="426.9" width="3" height="1" fill="#bdc1c6"/>
<rect x="282" y="436.7" width="3" height="1" fill="#bdc1c6"/>
<rect x="282" y="446.5" width="3" height="1" fill="#bdc1c6"/>
<text x="0" y="0" font-size="12.5" fill="#3c4043" text-anchor="middle" font-family="Liberation Sans" transform="translate(287.5,456.9) rotate(-90)">2</text>
<rect x="282" y="466.2" width="3" height="1" fill="#bdc1c6"/>
<rect x="282" y="476.1" width="3" height="1" fill="#bdc1c6"/>
<rect x="282" y="485.9" width="3" height="1" fill="#bdc1c6"/>
<rect x="279" y="495.7" width="9" height="1" fill="#9aa0a6"/>
<rect x="282" y="505.6" width="3" height="1" fill="#bdc1c6"/>
<rect x="282" y="515.4" width="3" height="1" fill="#bdc1c6"/>
<rect x="282" y="525.2" width="3" height="1" fill="#bdc1c6"/>
<text x="0" y="0" font-size="12.5" fill="#3c4043" text-anchor="middle" font-family="Liberation Sans" transform="translate(287.5,535.6) rotate(-90)">3</text>
<rect x="282" y="544.9" width="3" height="1" fill="#bdc1c6"/>
<rect x="282" y="554.7" width="3" height="1" fill="#bdc1c6"/>
<rect x="282" y="564.6" width="3" height="1" fill="#bdc1c6"/>
<rect x="279" y="574.4" width="9" height="1" fill="#9aa0a6"/>
<rect x="282" y="584.3" width="3" height="1" fill="#bdc1c6"/>
<rect x="282" y="594.1" width="3" height="1" fill="#bdc1c6"/>
<rect x="282" y="603.9" width="3" height="1" fill="#bdc1c6"/>
<text x="0" y="0" font-size="12.5" fill="#3c4043" text-anchor="middle" font-family="Liberation Sans" transform="translate(287.5,614.3) rotate(-90)">4</text>
<rect x="282" y="623.6" width="3" height="1" fill="#bdc1c6"/>
<rect x="282" y="633.4" width="3" height="1" fill="#bdc1c6"/>
<rect x="282" y="643.3" width="3" height="1" fill="#bdc1c6"/>
<rect x="279" y="653.1" width="9" height="1" fill="#9aa0a6"/>
<rect x="282" y="662.9" width="3" height="1" fill="#bdc1c6"/>
<rect x="282" y="672.8" width="3" height="1" fill="#bdc1c6"/>
<rect x="282" y="682.6" width="3" height="1" fill="#bdc1c6"/>
<text x="0" y="0" font-size="12.5" fill="#3c4043" text-anchor="middle" font-family="Liberation Sans" transform="translate(287.5,693.0) rotate(-90)">5</text>
<rect x="282" y="702.3" width="3" height="1" fill="#bdc1c6"/>
<rect x="282" y="712.1" width="3" height="1" fill="#bdc1c6"/>
<rect x="282" y="722.0" width="3" height="1" fill="#bdc1c6"/>
<rect x="279" y="731.8" width="9" height="1" fill="#9aa0a6"/>
<rect x="282" y="741.6" width="3" height="1" fill="#bdc1c6"/>
<rect x="282" y="751.5" width="3" height="1" fill="#bdc1c6"/>
<rect x="282" y="761.3" width="3" height="1" fill="#bdc1c6"/>
<text x="0" y="0" font-size="12.5" fill="#3c4043" text-anchor="middle" font-family="Liberation Sans" transform="translate(287.5,771.6) rotate(-90)">6</text>
<rect x="282" y="781.0" width="3" height="1" fill="#bdc1c6"/>
<rect x="282" y="790.8" width="3" height="1" fill="#bdc1c6"/>
<rect x="282" y="800.6" width="3" height="1" fill="#bdc1c6"/>
<rect x="279" y="810.5" width="9" height="1" fill="#9aa0a6"/>
<rect x="282" y="820.3" width="3" height="1" fill="#bdc1c6"/>
<rect x="282" y="830.2" width="3" height="1" fill="#bdc1c6"/>
<rect x="282" y="840.0" width="3" height="1" fill="#bdc1c6"/>
<text x="0" y="0" font-size="12.5" fill="#3c4043" text-anchor="middle" font-family="Liberation Sans" transform="translate(287.5,850.3) rotate(-90)">7</text>
<rect x="282" y="859.7" width="3" height="1" fill="#bdc1c6"/>
<rect x="282" y="869.5" width="3" height="1" fill="#bdc1c6"/>
<rect x="282" y="879.3" width="3" height="1" fill="#bdc1c6"/>
</svg>
<div class="a" style="left:548px;top:300px;width:1048px;height:589px;background:#fff;border:20px solid #e25323"></div>
<div class="t" style="left:653px;top:366.5px;font-size:84px;color:#e25323;letter-spacing:4px">8.</div>
<div class="t" style="left:653px;top:473.5px;font-size:53.5px;color:#e25323;line-height:67px;transform:scaleX(0.926);transform-origin:0 0">City life gives me access to basketball</div>
<div class="t" style="left:653px;top:540.5px;font-size:53.5px;color:#e25323;line-height:67px;transform:scaleX(0.952);transform-origin:0 0">courts and baseball diamonds.</div>
<div class="a" style="left:275px;top:909px;width:1575px;height:1px;background:#dadce0"></div>
<div class="a" style="left:275px;top:910px;width:1575px;height:110px;background:#fff"></div>
<div class="a" style="left:275px;top:920px;width:1575px;height:1px;background:#dadce0"></div>
<div class="a" style="left:1050px;top:913px;width:4px;height:4px;background:#bdc1c6;border-radius:1px"></div>
<div class="a" style="left:1060px;top:913px;width:4px;height:4px;background:#bdc1c6;border-radius:1px"></div>
<div class="a" style="left:1071px;top:913px;width:4px;height:4px;background:#bdc1c6;border-radius:1px"></div>
<div class="t" style="left:295px;top:937px;font-size:18.2px;color:#202124">Click to add speaker notes</div>
<div class="a" style="left:1850px;top:210px;width:70px;height:810px;background:#fff;border-left:1px solid #dadce0"></div>
<svg style="left:1874px;top:233px" width="25" height="25" viewBox="0 0 25 25"><rect width="25" height="25" rx="3" fill="#fbbc04"/><circle cx="12.5" cy="10.5" r="5" fill="#fff"/><rect x="10" y="13" width="5" height="4" fill="#fff"/><rect x="10.5" y="18" width="4" height="1.5" fill="#fff"/></svg>
<svg style="left:1875px;top:304px" width="24" height="24" viewBox="0 0 24 24"><circle cx="12" cy="12" r="12" fill="#4285f4"/><path d="M9 16.5L17 8.5" stroke="#fff" stroke-width="2.5"/><circle cx="6.8" cy="12.8" r="1.8" fill="#fbbc04"/></svg>
<div class="a" style="left:1461px;top:589px;width:450px;height:423px;background:#fff;border-radius:2px;box-shadow:0 1px 3px rgba(0,0,0,.3),0 4px 8px 3px rgba(0,0,0,.15);overflow:hidden">
<div class="a" style="left:0;top:363px;width:450px;height:60px;background:#ededed"></div>
</div>
<svg style="left:1485px;top:605px" width="16" height="16" viewBox="0 0 16 16"><rect x="1" y="1" width="14" height="14" rx="1" fill="none" stroke="#1a73e8" stroke-width="2"/><circle cx="8" cy="8" r="2.8" fill="none" stroke="#1a73e8" stroke-width="1.8"/></svg>
<div class="t" style="left:1511px;top:605px;font-size:14.6px;color:#1a73e8">Screen capture</div>
<div class="t" style="left:1621px;top:604px;font-size:14.6px;color:#202124">•</div>
<div class="t" style="left:1633px;top:605px;font-size:14.6px;color:#202124">now</div>
<svg style="left:1666px;top:607px" width="12" height="10" viewBox="0 0 12 10"><path d="M1.5 7.5L6 3L10.5 7.5" fill="none" stroke="#1a73e8" stroke-width="1.8"/></svg>
<div class="t" style="left:1481px;top:637px;font-size:16.2px;color:#202124">Screenshot taken</div>
<div class="t" style="left:1481px;top:662px;font-size:16.5px;color:#5f6368">Show in folder</div>
<div class="a" style="left:1481px;top:702px;width:410px;height:185px;overflow:hidden;background:#fff" id="pv"><div class="a" style="left:0;top:0px;width:1920px;height:1080px;transform:scale(0.21354);transform-origin:0 0">

<!-- ===== Chrome tab strip ===== -->
<div class="a" style="left:0;top:0;width:1920px;height:41px;background:#dee1e6"></div>
<!-- active tab -->
<div class="a" style="left:310px;top:0;width:298px;height:41px;background:#fff;border-radius:10px 10px 0 0"></div>
<div class="a" style="left:302px;top:33px;width:8px;height:8px;background:radial-gradient(circle at 0 0,#dee1e6 8px,#fff 8.5px)"></div>
<div class="a" style="left:608px;top:33px;width:8px;height:8px;background:radial-gradient(circle at 100% 0,#dee1e6 8px,#fff 8.5px)"></div>

<!-- ===== Chrome toolbar ===== -->
<div class="a" style="left:0;top:41px;width:1920px;height:87px;background:#fff"></div>
<div class="a" style="left:175px;top:47px;width:1651px;height:34px;background:#f1f3f4;border-radius:17px"></div>
<div class="a" style="left:0;top:128px;width:1920px;height:1px;background:#dadce0"></div>
<!-- tab 1 -->
<svg style="left:25px;top:10px" width="20" height="20" viewBox="0 0 20 20"><rect width="20" height="20" fill="#3f48b5"/><rect x="4" y="5" width="12" height="2.4" fill="#fff"/><rect x="4" y="10.5" width="5" height="4.3" fill="#fff"/><rect x="12.3" y="10.5" width="3.7" height="4.3" fill="#fff"/></svg>
<div class="t" style="left:55px;top:14px;font-size:14.7px;color:#3c4043;width:217px;overflow:hidden;-webkit-mask-image:linear-gradient(90deg,#000 85%,transparent)">STAAR Writing Transitions - Task</div>
<svg style="left:284px;top:14px" width="14" height="14" viewBox="0 0 14 14"><path d="M2 2L12 12M12 2L2 12" stroke="#3c4043" stroke-width="1.7"/></svg>
<!-- tab 2 -->
<svg style="left:324px;top:10px" width="20" height="20" viewBox="0 0 20 20"><rect x="0" y="0" width="20" height="20" rx="2" fill="#f4b400"/><rect x="2.5" y="5.7" width="15" height="8.3" fill="#fff"/></svg>
<div class="t" style="left:354px;top:14px;font-size:14.7px;color:#3c4043;width:217px;overflow:hidden;-webkit-mask-image:linear-gradient(90deg,#000 85%,transparent)">Copy of STAAR Transitions-Level 5</div>
<svg style="left:582px;top:14px" width="14" height="14" viewBox="0 0 14 14"><path d="M2 2L12 12M12 2L2 12" stroke="#3c4043" stroke-width="1.7"/></svg>
<!-- tab 3 -->
<svg style="left:622px;top:10px" width="21" height="20" viewBox="0 0 21 20"><path d="M0 3L21 0V17L0 20Z" fill="#000"/><text x="5.5" y="15" font-family="Liberation Serif" font-weight="bold" font-size="14" fill="#fff">B</text></svg>
<div class="t" style="left:653px;top:14px;font-size:14.7px;color:#3c4043;width:217px;overflow:hidden;-webkit-mask-image:linear-gradient(90deg,#000 85%,transparent)">Brainly.com - For students. By students.</div>
<svg style="left:881px;top:14px" width="14" height="14" viewBox="0 0 14 14"><path d="M2 2L12 12M12 2L2 12" stroke="#3c4043" stroke-width="1.7"/></svg>
<div class="a" style="left:906px;top:9px;width:2px;height:24px;background:#9aa0a6"></div>
<svg style="left:925px;top:10px" width="20" height="20" viewBox="0 0 20 20"><path d="M10 2V18M2 10H18" stroke="#3c4043" stroke-width="2.4"/></svg>
<!-- window controls -->
<svg style="left:1763px;top:11px" width="20" height="20" viewBox="0 0 20 20"><circle cx="10" cy="10" r="9.5" fill="#3c4043"/><path d="M6 8H14L10 13Z" fill="#dee1e6"/></svg>
<div class="a" style="left:1813.5px;top:26px;width:14px;height:2px;background:#5f6368"></div>
<svg style="left:1852px;top:13px" width="18" height="18" viewBox="0 0 18 18"><rect x="8.8" y="2.8" width="6.4" height="6.4" fill="none" stroke="#5f6368" stroke-width="1.6"/><path d="M2.8 6V14.2H11" fill="none" stroke="#5f6368" stroke-width="1.6"/></svg>
<svg style="left:1893px;top:14px" width="15" height="15" viewBox="0 0 15 15"><path d="M1.2 1.2L13.8 13.8M13.8 1.2L1.2 13.8" stroke="#5f6368" stroke-width="1.6"/></svg>

<!-- nav buttons -->
<svg style="left:16px;top:52px" width="24" height="24" viewBox="0 0 24 24"><path fill="#5f6368" d="M20 11H7.83l5.59-5.59L12 4l-8 8 8 8 1.41-1.41L7.83 13H20v-2z"/></svg>
<svg style="left:56px;top:52px" width="24" height="24" viewBox="0 0 24 24"><path fill="#c4c7ca" d="M12 4l-1.41 1.41L16.17 11H4v2h12.17l-5.58 5.59L12 20l8-8z"/></svg>
<svg style="left:96px;top:52px" width="24" height="24" viewBox="0 0 24 24"><path fill="#5f6368" d="M17.65 6.35C16.2 4.9 14.21 4 12 4c-4.42 0-7.99 3.58-7.99 8s3.57 8 7.99 8c3.73 0 6.84-2.55 7.73-6h-2.08c-.82 2.33-3.04 4-5.65 4-3.31 0-6-2.69-6-6s2.69-6 6-6c1.66 0 3.14.69 4.22 1.78L13 11h7V4l-2.35 2.35z"/></svg>
<svg style="left:136px;top:52px" width="24" height="24" viewBox="0 0 24 24"><path d="M5 12.5L12 5.2L19 12.5M6.8 11V19.4H17.2V11" fill="none" stroke="#5f6368" stroke-width="1.9" stroke-linejoin="miter"/></svg>
<svg style="left:188px;top:53px" width="20" height="20" viewBox="0 0 24 24"><path fill="#5f6368" d="M12 7V3H2v18h20V7H12zM6 19H4v-2h2v2zm0-4H4v-2h2v2zm0-4H4V9h2v2zm0-4H4V5h2v2zm4 12H8v-2h2v2zm0-4H8v-2h2v2zm0-4H8V9h2v2zm0-4H8V5h2v2zm10 12h-8v-2h2v-2h-2v-2h2v-2h-2V9h8v10zm-2-8h-2v2h2v-2zm0 4h-2v2h2v-2z"/></svg>
<div class="t" style="left:218px;top:55px;font-size:17.6px;color:#5f6368"><span style="color:#202124">docs.google.com</span><span style="font-size:17.28px">/presentation/d/1sZYb5AvxBuumqeK3YUGWQFR0ncCozB_gDWld_zl_laQ/edit#slide=id.p9</span></div>
<svg style="left:1791px;top:51px" width="24" height="24" viewBox="0 0 24 24"><path fill="#5f6368" d="M22 9.24l-7.19-.62L12 2 9.19 8.63 2 9.24l5.46 4.73L5.82 21 12 17.27 18.18 21l-1.63-7.03L22 9.24zM12 15.4l-3.76 2.27 1-4.28-3.32-2.88 4.38-.38L12 6.1l1.71 4.04 4.38.38-3.32 2.88 1 4.28L12 15.4z"/></svg>
<svg style="left:1842px;top:53px" width="21" height="21" viewBox="0 0 24 24"><path fill="#5f6368" d="M20.5 11H19V7c0-1.1-.9-2-2-2h-4V3.5C13 2.12 11.88 1 10.5 1S8 2.12 8 3.5V5H4c-1.1 0-1.99.9-1.99 2v3.8H3.5c1.49 0 2.7 1.21 2.7 2.7s-1.21 2.7-2.7 2.7H2V20c0 1.1.9 2 2 2h3.8v-1.5c0-1.49 1.21-2.7 2.7-2.7 1.49 0 2.7 1.21 2.7 2.7V22H17c1.1 0 2-.9 2-2v-4h1.5c1.38 0 2.5-1.12 2.5-2.5S21.88 11 20.5 11z"/></svg>
<svg style="left:1881px;top:51px" width="24" height="24" viewBox="0 0 24 24"><path fill="#5f6368" d="M12 8c1.1 0 2-.9 2-2s-.9-2-2-2-2 .9-2 2 .9 2 2 2zm0 2c-1.1 0-2 .9-2 2s.9 2 2 2 2-.9 2-2-.9-2-2-2zm0 6c-1.1 0-2 .9-2 2s.9 2 2 2 2-.9 2-2-.9-2-2-2z"/></svg>

<!-- bookmarks -->
<svg style="left:18px;top:95px" width="20" height="20" viewBox="0 0 24 24"><path fill="#80868b" d="M10 4H4c-1.1 0-1.99.9-1.99 2L2 18c0 1.1.9 2 2 2h16c1.1 0 2-.9 2-2V8c0-1.1-.9-2-2-2h-8l-2-2z"/><rect x="6" y="10" width="12" height="8" fill="#e8eaed"/><path d="M8 12h2v2H8zM11 12h2v2h-2zM8 15h2v2H8zM14 12h2v5h-2z" fill="#80868b"/></svg>
<div class="t" style="left:48px;top:99px;font-size:14.5px;color:#3c4043">CFISD Bookmarks</div>
<svg style="left:188px;top:95px" width="22" height="20" viewBox="0 0 22 20"><circle cx="8" cy="9" r="6" fill="#a5d86e"/><circle cx="13" cy="7" r="5" fill="#d9a7e8"/><circle cx="11" cy="14" r="5" fill="#5bc0de"/><text x="8" y="17" font-size="7" font-weight="bold" fill="#3b5bdb" font-family="Liberation Sans">YG</text></svg>
<div class="t" style="left:219px;top:99px;font-size:14.5px;color:#3c4043">Guess the Number |...</div>
<svg style="left:381px;top:95px" width="20" height="20" viewBox="0 0 20 20"><rect x="0.5" y="0.5" width="19" height="19" fill="#fff" stroke="#e53935"/><path d="M3 6C7 5 12 5 17 3M10 5L9 17M9 9L14 14" stroke="#d32f2f" stroke-width="2" fill="none"/></svg>
<div class="t" style="left:411px;top:99px;font-size:14.5px;color:#3c4043">Achieve3000: Lesson</div>
<svg style="left:575px;top:98px" width="19" height="14" viewBox="0 0 19 14"><rect width="19" height="14" rx="3.5" fill="#e62117"/><path d="M7 3.5V10.5L13 7Z" fill="#fff"/></svg>
<div class="t" style="left:604px;top:99px;font-size:14.5px;color:#3c4043">www.youtube.com</div>
<svg style="left:749px;top:96px" width="20" height="20" viewBox="0 0 20 20"><rect width="20" height="20" rx="1.5" fill="#0d3c7c"/><text x="1" y="13.5" font-size="7.8" font-weight="bold" fill="#fff" font-family="Liberation Sans" letter-spacing="-0.4">HAC</text></svg>
<svg style="left:789px;top:96px" width="20" height="20" viewBox="0 0 20 20"><rect width="20" height="20" fill="#f6c63d"/><path d="M4 16L8 4H10L6 16ZM8 16L12 4H14L10 16ZM12 16L16 4H18L14 16Z" fill="#050038"/></svg>
<div class="t" style="left:819px;top:99px;font-size:14.5px;color:#3c4043">AWW App | Online...</div>
<svg style="left:982px;top:96px" width="20" height="20" viewBox="0 0 20 20"><rect x="0" y="0" width="20" height="20" rx="2" fill="#f4b400"/><rect x="2.5" y="5.7" width="15" height="8.3" fill="#fff"/></svg>
<div class="t" style="left:1012px;top:99px;font-size:14.5px;color:#3c4043">Untitled presentatio...</div>


<!-- ===== Docs header ===== -->
<div class="a" style="left:0;top:209px;width:1920px;height:1px;background:#dadce0"></div>

<!-- logo -->
<svg style="left:29px;top:147px" width="33" height="45" viewBox="0 0 33 45"><path d="M3 0H23L33 10V42a3 3 0 0 1-3 3H3a3 3 0 0 1-3-3V3a3 3 0 0 1 3-3Z" fill="#f4b400"/><path d="M23 0L33 10H25a2 2 0 0 1-2-2Z" fill="#f09300"/><rect x="7.5" y="19.5" width="18" height="11" fill="none" stroke="#fff" stroke-width="2.5"/></svg>
<div class="t" style="left:90px;top:145px;font-size:21.9px;color:#202124">Copy of STAAR Transitions-Level 5</div>
<svg style="left:458px;top:146px" width="22" height="22" viewBox="0 0 24 24"><path fill="#5f6368" d="M22 9.24l-7.19-.62L12 2 9.19 8.63 2 9.24l5.46 4.73L5.82 21 12 17.27 18.18 21l-1.63-7.03L22 9.24zM12 15.4l-3.76 2.27 1-4.28-3.32-2.88 4.38-.38L12 6.1l1.71 4.04 4.38.38-3.32 2.88 1 4.28L12 15.4z"/></svg>
<svg style="left:494px;top:146px" width="22" height="22" viewBox="0 0 24 24"><path fill="#5f6368" d="M20 6h-8l-2-2H4c-1.1 0-1.99.9-1.99 2L2 18c0 1.1.9 2 2 2h16c1.1 0 2-.9 2-2V8c0-1.1-.9-2-2-2zm0 12H4V6h5.17l2 2H20v10zm-7.84-6H8v2h4.16l-1.59 1.59L11.99 17 16 13.01 11.99 9l-1.41 1.41L12.16 12z"/></svg>
<svg style="left:533px;top:146px" width="23" height="23" viewBox="0 0 24 24"><path fill="#5f6368" d="M19.35 10.04C18.67 6.59 15.64 4 12 4 9.110 4 6.6 5.64 5.35 8.04 2.34 8.36 0 10.91 0 14c0 3.31 2.69 6 6 6h13c2.76 0 5-2.24 5-5 0-2.64-2.050-4.78-4.65-4.96zM19 18H6c-2.21 0-4-1.79-4-4 0-2.05 1.53-3.760 3.56-3.97l1.07-.11.5-.95C8.08 7.14 9.94 6 12 6c2.62 0 4.88 1.86 5.39 4.43l.3 1.5 1.53.11c1.56.1 2.78 1.41 2.78 2.96 0 1.65-1.35 3-3 3zm-9-3.82l-2.09-2.09L6.5 13.5 10 17l6.01-6.01-1.41-1.41z"/></svg>
<div class="t" style="left:89px;top:180px;font-size:17.5px;color:#202124">File</div>
<div class="t" style="left:135px;top:180px;font-size:17.5px;color:#202124">Edit</div>
<div class="t" style="left:182px;top:180px;font-size:17.5px;color:#202124">View</div>
<div class="t" style="left:239px;top:180px;font-size:17.5px;color:#202124">Insert</div>
<div class="t" style="left:303px;top:180px;font-size:17.5px;color:#202124">Format</div>
<div class="t" style="left:378px;top:180px;font-size:17.5px;color:#202124">Slide</div>
<div class="t" style="left:435px;top:180px;font-size:17.5px;color:#202124">Arrange</div>
<div class="t" style="left:515px;top:180px;font-size:17.5px;color:#202124">Tools</div>
<div class="t" style="left:577px;top:180px;font-size:17.5px;color:#202124">Add-ons</div>
<div class="t" style="left:661px;top:180px;font-size:17.5px;color:#202124">Help</div>
<div class="t" style="left:724px;top:180px;font-size:17.5px;color:#5f6368;text-decoration:underline;text-underline-offset:1.5px">Last edit was 6 minutes ago</div>
<!-- right header -->
<svg style="left:1438px;top:152px" width="28" height="28" viewBox="0 0 24 24"><path fill="#5f6368" d="M16 6l2.29 2.29-4.88 4.88-4-4L2 16.59 3.41 18l6-6 4 4 6.3-6.29L22 12V6z"/></svg>
<svg style="left:1501px;top:153px" width="28" height="28" viewBox="0 0 24 24"><path fill="#5f6368" d="M21.99 4c0-1.1-.89-2-1.99-2H4c-1.1 0-2 .9-2 2v12c0 1.1.9 2 2 2h14l4 4-.01-18zM20 4v13.170L18.83 16H4V4h16zM6 12h12v2H6zm0-3h12v2H6zm0-3h12v2H6z"/></svg>
<div class="a" style="left:1554px;top:147px;width:156px;height:45px;border:1px solid #dadce0;border-radius:4px;background:#fff"></div>
<div class="a" style="left:1683px;top:148px;width:1px;height:43px;background:#dadce0"></div>
<svg style="left:1568px;top:157px" width="24" height="24" viewBox="0 0 24 24"><path fill="#202124" d="M10 8v8l5-4-5-4zm9-5H5c-1.1 0-2 .9-2 2v14c0 1.1.9 2 2 2h14c1.1 0 2-.9 2-2V5c0-1.1-.9-2-2-2zm0 16H5V5h14v14z"/></svg>
<div class="t" style="left:1604px;top:158px;font-size:18px;color:#202124;letter-spacing:0.1px;-webkit-text-stroke:0.3px #202124">Present</div>
<svg style="left:1684px;top:157px" width="24" height="24" viewBox="0 0 24 24"><path fill="#202124" d="M7 10l5 5 5-5z"/></svg>
<div class="a" style="left:1720px;top:147px;width:110px;height:45px;background:#fbbc04;border-radius:4px"></div>
<svg style="left:1735px;top:159px" width="18" height="18" viewBox="0 0 24 24"><path fill="#202124" d="M18 8h-1V6c0-2.76-2.24-5-5-5S7 3.24 7 6v2H6c-1.1 0-2 .9-2 2v10c0 1.1.9 2 2 2h12c1.100 0 2-.9 2-2V10c0-1.1-.9-2-2-2zm-6 9c-1.1 0-2-.9-2-2s.9-2 2-2 2 .9 2 2-.9 2-2 2zm3.1-9H8.9V6c0-1.71 1.39-3.1 3.1-3.1 1.71 0 3.1 1.39 3.1 3.1v2z"/></svg>
<div class="t" style="left:1761px;top:158px;font-size:18.5px;color:#202124;-webkit-text-stroke:0.3px #202124">Share</div>
<div class="a" style="left:1855px;top:149px;width:40px;height:40px;border-radius:50%;background:#8d6e63"></div>
<div class="t" style="left:1866px;top:159px;font-size:22px;color:#f3e9e4">E</div>

<!-- ===== Docs toolbar ===== -->
<div class="a" style="left:29px;top:219px;width:55px;height:31px;background:#f1f3f4;border-radius:4px"></div>
<svg style="left:34px;top:223px" width="24" height="24" viewBox="0 0 24 24"><path fill="#3c4043" d="M19 13h-6v6h-2v-6H5v-2h6V5h2v6h6v2z"/></svg>
<svg style="left:62px;top:223px" width="24" height="24" viewBox="0 0 24 24"><path fill="#3c4043" d="M7 10l5 5 5-5z"/></svg>
<svg style="left:93px;top:223px" width="24" height="24" viewBox="0 0 24 24"><path fill="#3c4043" d="M12.5 8c-2.65 0-5.05.99-6.9 2.6L2 7v9h9l-3.62-3.62c1.39-1.16 3.16-1.88 5.12-1.88 3.54 0 6.55 2.31 7.6 5.5l2.37-.78C21.08 11.03 17.15 8 12.5 8z"/></svg>
<svg style="left:128px;top:223px" width="24" height="24" viewBox="0 0 24 24"><path fill="#3c4043" d="M18.4 10.6C16.55 8.99 14.15 8 11.5 8c-4.65 0-8.58 3.03-9.96 7.22L3.9 16c1.05-3.19 4.05-5.5 7.6-5.5 1.95 0 3.73.72 5.12 1.880L13 16h9V7l-3.6 3.6z"/></svg>
<svg style="left:163px;top:222px" width="24" height="24" viewBox="0 0 24 24"><path fill="#3c4043" d="M19 8H5c-1.66 0-3 1.34-3 3v6h4v4h12v-4h4v-6c0-1.66-1.34-3-3-3zm-3 11H8v-5h8v5zm3-7c-.55 0-1-.45-1-1s.45-1 1-1 1 .45 1 1-.45 1-1 1zm-1-9H6v4h12V3z"/></svg>
<svg style="left:199px;top:222px" width="24" height="24" viewBox="0 0 24 24"><path fill="#bdc1c6" d="M18 4V3c0-.55-.45-1-1-1H5c-.55 0-1 .45-1 1v4c0 .55.45 1 1 1h12c.55 0 1-.45 1-1V6h1v4H9v11c0 .55.45 1 1 1h2c.55 0 1-.45 1-1v-9h8V4h-3z"/></svg>
<div class="a" style="left:233px;top:221px;width:1px;height:27px;background:#dadce0"></div>
<svg style="left:244px;top:222px" width="26" height="26" viewBox="0 0 24 24"><path fill="#3c4043" d="M15.5 14h-.79l-.28-.27C15.41 12.59 16 11.11 16 9.5 16 5.91 13.09 3 9.5 3S3 5.910 3 9.5 5.91 16 9.5 16c1.61 0 3.09-.59 4.23-1.57l.27.28v.79l5 4.99L20.49 19l-4.99-5zm-6 0C7.01 14 5 11.99 5 9.5S7.01 5 9.5 5 14 7.01 14 9.5 11.99 14 9.5 14zm2.5-4h-2v2H9v-2H7V9h2V7h1v2h2v1z"/></svg>
<svg style="left:273px;top:223px" width="24" height="24" viewBox="0 0 24 24"><path fill="#3c4043" d="M7 10l5 5 5-5z"/></svg>
<div class="a" style="left:301px;top:221px;width:1px;height:27px;background:#dadce0"></div>
<div class="a" style="left:309px;top:218px;width:31px;height:32px;background:#feefc3;border-radius:4px"></div>
<svg style="left:318px;top:225px" width="16" height="19" viewBox="0 0 16 19"><path d="M2 1L14 12.5H8.8L11.8 17.5L9.6 18.6L6.7 13.5L2 17Z" fill="#202124"/></svg>
<svg style="left:349px;top:223px" width="23" height="23" viewBox="0 0 23 23"><rect x="2.5" y="2.5" width="18" height="18" fill="none" stroke="#3c4043" stroke-width="2"/><rect x="0.5" y="0.5" width="4" height="4" fill="#fff" stroke="#3c4043" stroke-width="1.3"/><rect x="18.5" y="0.5" width="4" height="4" fill="#fff" stroke="#3c4043" stroke-width="1.3"/><rect x="0.5" y="18.5" width="4" height="4" fill="#fff" stroke="#3c4043" stroke-width="1.3"/><rect x="18.5" y="18.5" width="4" height="4" fill="#fff" stroke="#3c4043" stroke-width="1.3"/><path d="M7 7H16M11.5 7V16" stroke="#3c4043" stroke-width="2.2"/></svg>
<svg style="left:382px;top:222px" width="24" height="24" viewBox="0 0 24 24"><path fill="#3c4043" d="M19 5v14H5V5h14m0-2H5c-1.1 0-2 .9-2 2v14c0 1.1.9 2 2 2h14c1.1 0 2-.9 2-2V5c0-1.1-.9-2-2-2zm-4.86 8.86l-3 3.87L9 13.14 6 17h12l-3.86-5.14z"/></svg>
<svg style="left:403px;top:223px" width="24" height="24" viewBox="0 0 24 24"><path fill="#3c4043" d="M7 10l5 5 5-5z"/></svg>
<svg style="left:433px;top:223px" width="22" height="22" viewBox="0 0 22 22"><rect x="8" y="8.5" width="12.5" height="12" fill="none" stroke="#3c4043" stroke-width="2"/><circle cx="8.5" cy="8.5" r="7" fill="#fff" stroke="#3c4043" stroke-width="2"/></svg>
<svg style="left:472px;top:225px" width="20" height="19" viewBox="0 0 20 19"><path d="M3 3L17 16" stroke="#3c4043" stroke-width="2.2"/><circle cx="3" cy="3" r="2.2" fill="#3c4043"/><circle cx="17" cy="16" r="2.2" fill="#3c4043"/></svg>
<svg style="left:498px;top:223px" width="24" height="24" viewBox="0 0 24 24"><path fill="#3c4043" d="M7 10l5 5 5-5z"/></svg>
<div class="a" style="left:526px;top:221px;width:1px;height:27px;background:#dadce0"></div>
<svg style="left:538px;top:222px" width="24" height="24" viewBox="0 0 24 24"><path fill="#3c4043" d="M22 4c0-1.1-.9-2-2-2H4c-1.1 0-1.99.9-1.99 2L2 16c0 1.1.9 2 2 2h14l4 4V4zm-2 13.17L18.83 16H4V4h16v13.17zM13 5h-2v4H7v2h4v4h2v-4h4V9h-4z" transform="translate(24,0) scale(-1,1)"/></svg>
<div class="a" style="left:573px;top:221px;width:1px;height:27px;background:#dadce0"></div>
<div class="t" style="left:586px;top:226px;font-size:15px;color:#3c4043;-webkit-text-stroke:0.25px #3c4043">Background</div>
<div class="a" style="left:680px;top:221px;width:1px;height:27px;background:#dadce0"></div>
<div class="t" style="left:694px;top:226px;font-size:15px;color:#3c4043;-webkit-text-stroke:0.25px #3c4043">Layout</div>
<svg style="left:734px;top:224px" width="20" height="20" viewBox="0 0 24 24"><path fill="#3c4043" d="M7 10l5 5 5-5z"/></svg>
<div class="a" style="left:763px;top:221px;width:1px;height:27px;background:#dadce0"></div>
<div class="t" style="left:777px;top:226px;font-size:15px;color:#3c4043;-webkit-text-stroke:0.25px #3c4043">Theme</div>
<div class="a" style="left:836px;top:221px;width:1px;height:27px;background:#dadce0"></div>
<div class="t" style="left:850px;top:226px;font-size:15px;color:#3c4043;-webkit-text-stroke:0.25px #3c4043">Transition</div>
<svg style="left:1815px;top:222px" width="24" height="24" viewBox="0 0 24 24"><path fill="#3c4043" d="M12 8l-6 6 1.41 1.41L12 10.83l4.59 4.58L18 14z"/></svg>
<div class="a" style="left:0;top:258px;width:1850px;height:1px;background:#dadce0"></div>

<!-- ===== Filmstrip ===== -->
<div class="a" style="left:0;top:259px;width:274px;height:761px;overflow:hidden"><div class="a" style="left:0;top:-259px;width:274px;height:1080px"><div class="a" style="left:0;top:716.5px;width:252px;height:122px;background:#feefc3"></div>
<div class="a" style="left:52px;top:212px;width:194px;height:112px;border:2px solid #dadce0;border-radius:8px;background:#fff"></div>
<div class="a" style="left:57px;top:216px;width:184px;height:104px;border:3.5px solid #e25323;border-radius:2px;background:#fff"></div>
<div class="a" style="left:52px;top:340px;width:194px;height:112px;border:2px solid #dadce0;border-radius:8px;background:#fff"></div>
<div class="a" style="left:57px;top:344px;width:184px;height:104px;border:3.5px solid #e25323;border-radius:2px;background:#fff"></div>
<div class="t" style="left:30.5px;top:340.5px;font-size:15px;color:#5f6368;-webkit-text-stroke:0.3px #5f6368">4</div>
<div class="a" style="left:52px;top:468px;width:194px;height:112px;border:2px solid #dadce0;border-radius:8px;background:#fff"></div>
<div class="a" style="left:57px;top:472px;width:184px;height:104px;border:3.5px solid #e25323;border-radius:2px;background:#fff"></div>
<div class="t" style="left:30.5px;top:468.5px;font-size:15px;color:#5f6368;-webkit-text-stroke:0.3px #5f6368">5</div>
<div class="a" style="left:52px;top:596px;width:194px;height:112px;border:2px solid #dadce0;border-radius:8px;background:#fff"></div>
<div class="a" style="left:57px;top:600px;width:184px;height:104px;border:3.5px solid #e25323;border-radius:2px;background:#fff"></div>
<div class="t" style="left:30.5px;top:596.5px;font-size:15px;color:#5f6368;-webkit-text-stroke:0.3px #5f6368">6</div>
<div class="a" style="left:51.5px;top:722.5px;width:195px;height:114px;border:2px solid #eaa62a;border-radius:8px;background:#fff"></div>
<div class="a" style="left:57px;top:727.5px;width:184px;height:104px;border:3.5px solid #e25323;border-radius:2px;background:#fff"></div>
<div class="t" style="left:30.5px;top:724.0px;font-size:15px;color:#202124;-webkit-text-stroke:0.3px #202124">7</div>
<div class="a" style="left:52px;top:851.3px;width:194px;height:112px;border:2px solid #dadce0;border-radius:8px;background:#fff"></div>
<div class="a" style="left:57px;top:855.3px;width:184px;height:104px;border:3.5px solid #e25323;border-radius:2px;background:#fff"></div>
<div class="t" style="left:30.5px;top:851.8px;font-size:15px;color:#5f6368;-webkit-text-stroke:0.3px #5f6368">8</div>
<div class="t" style="left:75px;top:361px;font-size:12px;color:#cc5f3c;font-family:'Liberation Sans'">4.</div>
<div class="t" style="left:75px;top:375px;font-size:7.3px;line-height:9.4px;color:#cc5f3c;font-family:'Liberation Serif'">And since I don't have to hop right on the bus at<br>the end of the school day, I can participate in<br>after-school activities or shoot hoops with my<br>friends on the basketball court.</div>
<div class="t" style="left:75px;top:487px;font-size:12px;color:#cc5f3c">5.</div>
<div class="t" style="left:75px;top:502px;font-size:9.6px;line-height:12px;color:#cc5f3c;font-family:'Liberation Serif';-webkit-text-stroke:0.15px #cc5f3c">I can walk to the bike store to get a<br>tire fixed, and then follow a bike path<br>that takes me straight to the park.</div>
<div class="t" style="left:75px;top:613px;font-size:12px;color:#cc5f3c">6.</div>
<div class="t" style="left:75px;top:632px;font-size:9px;line-height:9.5px;color:#cc5f3c;letter-spacing:0.45px">It seems that everything I need is<br>just minutes away.</div>
<div class="t" style="left:75px;top:742px;font-size:12px;color:#cc5f3c;font-family:'Liberation Serif'">7.</div>
<div class="t" style="left:75px;top:757px;font-size:9.4px;line-height:12.4px;color:#cc5f3c;font-family:'Liberation Serif'">When I want a book, it's a short walk<br>to the library.</div>
<div class="t" style="left:75px;top:868px;font-size:13px;color:#cc5f3c">8.</div>
<div class="t" style="left:75px;top:886px;font-size:8.8px;line-height:12.3px;color:#cc5f3c">City life gives me access to basketball<br>courts and baseball diamonds.</div>
<div class="a" style="left:259px;top:480px;width:10px;height:485px;background:#dadce0;border-radius:5px"></div>
<div class="a" style="left:0;top:972px;width:274px;height:48px;background:#fff;border-top:1px solid #dadce0"></div>
<div class="a" style="left:38px;top:971px;width:60px;height:3px;background:#202124"></div>
<svg style="left:55px;top:986px" width="21" height="18" viewBox="0 0 21 18"><rect x="1" y="3" width="5" height="5" fill="#5f6368"/><rect x="7" y="3" width="13" height="5" fill="#5f6368"/><rect x="1" y="10" width="5" height="5" fill="#5f6368"/><rect x="7" y="10" width="13" height="5" fill="#5f6368"/></svg>
<svg style="left:192px;top:986px" width="20" height="18" viewBox="0 0 20 18"><g fill="#5f6368"><rect x="1" y="2" width="5" height="4"/><rect x="7.5" y="2" width="5" height="4"/><rect x="14" y="2" width="5" height="4"/><rect x="1" y="7" width="5" height="4"/><rect x="7.5" y="7" width="5" height="4"/><rect x="14" y="7" width="5" height="4"/><rect x="1" y="12" width="5" height="4"/><rect x="7.5" y="12" width="5" height="4"/><rect x="14" y="12" width="5" height="4"/></g></svg></div></div>

<div class="a" style="left:274px;top:259px;width:1px;height:761px;background:#dadce0"></div>

<div class="a" style="left:275px;top:259px;width:1575px;height:650px;background:#f8f9fa"></div>
<div class="a" style="left:275px;top:259px;width:1575px;height:17px;background:#e8eaed;border-bottom:1px solid #dadce0"></div>
<div class="a" style="left:548px;top:259px;width:1048px;height:17px;background:#fff;border-bottom:1px solid #dadce0"></div>
<div class="a" style="left:275px;top:276px;width:17px;height:633px;background:#e8eaed;border-right:1px solid #dadce0"></div>
<div class="a" style="left:275px;top:300px;width:17px;height:589px;background:#fff;border-right:1px solid #dadce0"></div>
<div class="a" style="left:275px;top:259px;width:17px;height:17px;background:#f1f3f4;border-right:1px solid #dadce0;border-bottom:1px solid #dadce0"></div>
<svg style="left:0;top:0" width="1920" height="1080">
<rect x="556.8" y="266" width="1" height="3" fill="#bdc1c6"/>
<rect x="566.7" y="266" width="1" height="3" fill="#bdc1c6"/>
<rect x="576.5" y="266" width="1" height="3" fill="#bdc1c6"/>
<rect x="586.3" y="263" width="1" height="9" fill="#9aa0a6"/>
<rect x="596.2" y="266" width="1" height="3" fill="#bdc1c6"/>
<rect x="606.0" y="266" width="1" height="3" fill="#bdc1c6"/>
<rect x="615.9" y="266" width="1" height="3" fill="#bdc1c6"/>
<text x="626.2" y="271.5" font-size="12.5" fill="#3c4043" text-anchor="middle" font-family="Liberation Sans">1</text>
<rect x="635.5" y="266" width="1" height="3" fill="#bdc1c6"/>
<rect x="645.4" y="266" width="1" height="3" fill="#bdc1c6"/>
<rect x="655.2" y="266" width="1" height="3" fill="#bdc1c6"/>
<rect x="665.0" y="263" width="1" height="9" fill="#9aa0a6"/>
<rect x="674.9" y="266" width="1" height="3" fill="#bdc1c6"/>
<rect x="684.7" y="266" width="1" height="3" fill="#bdc1c6"/>
<rect x="694.5" y="266" width="1" height="3" fill="#bdc1c6"/>
<text x="704.9" y="271.5" font-size="12.5" fill="#3c4043" text-anchor="middle" font-family="Liberation Sans">2</text>
<rect x="714.2" y="266" width="1" height="3" fill="#bdc1c6"/>
<rect x="724.1" y="266" width="1" height="3" fill="#bdc1c6"/>
<rect x="733.9" y="266" width="1" height="3" fill="#bdc1c6"/>
<rect x="743.7" y="263" width="1" height="9" fill="#9aa0a6"/>
<rect x="753.6" y="266" width="1" height="3" fill="#bdc1c6"/>
<rect x="763.4" y="266" width="1" height="3" fill="#bdc1c6"/>
<rect x="773.2" y="266" width="1" height="3" fill="#bdc1c6"/>
<text x="783.6" y="271.5" font-size="12.5" fill="#3c4043" text-anchor="middle" font-family="Liberation Sans">3</text>
<rect x="792.9" y="266" width="1" height="3" fill="#bdc1c6"/>
<rect x="802.7" y="266" width="1" height="3" fill="#bdc1c6"/>
<rect x="812.6" y="266" width="1" height="3" fill="#bdc1c6"/>
<rect x="822.4" y="263" width="1" height="9" fill="#9aa0a6"/>
<rect x="832.3" y="266" width="1" height="3" fill="#bdc1c6"/>
<rect x="842.1" y="266" width="1" height="3" fill="#bdc1c6"/>
<rect x="851.9" y="266" width="1" height="3" fill="#bdc1c6"/>
<text x="862.3" y="271.5" font-size="12.5" fill="#3c4043" text-anchor="middle" font-family="Liberation Sans">4</text>
<rect x="871.6" y="266" width="1" height="3" fill="#bdc1c6"/>
<rect x="881.4" y="266" width="1" height="3" fill="#bdc1c6"/>
<rect x="891.3" y="266" width="1" height="3" fill="#bdc1c6"/>
<rect x="901.1" y="263" width="1" height="9" fill="#9aa0a6"/>
<rect x="910.9" y="266" width="1" height="3" fill="#bdc1c6"/>
<rect x="920.8" y="266" width="1" height="3" fill="#bdc1c6"/>
<rect x="930.6" y="266" width="1" height="3" fill="#bdc1c6"/>
<text x="941.0" y="271.5" font-size="12.5" fill="#3c4043" text-anchor="middle" font-family="Liberation Sans">5</text>
<rect x="950.3" y="266" width="1" height="3" fill="#bdc1c6"/>
<rect x="960.1" y="266" width="1" height="3" fill="#bdc1c6"/>
<rect x="970.0" y="266" width="1" height="3" fill="#bdc1c6"/>
<rect x="979.8" y="263" width="1" height="9" fill="#9aa0a6"/>
<rect x="989.6" y="266" width="1" height="3" fill="#bdc1c6"/>
<rect x="999.5" y="266" width="1" height="3" fill="#bdc1c6"/>
<rect x="1009.3" y="266" width="1" height="3" fill="#bdc1c6"/>
<text x="1019.6" y="271.5" font-size="12.5" fill="#3c4043" text-anchor="middle" font-family="Liberation Sans">6</text>
<rect x="1029.0" y="266" width="1" height="3" fill="#bdc1c6"/>
<rect x="1038.8" y="266" width="1" height="3" fill="#bdc1c6"/>
<rect x="1048.6" y="266" width="1" height="3" fill="#bdc1c6"/>
<rect x="1058.5" y="263" width="1" height="9" fill="#9aa0a6"/>
<rect x="1068.3" y="266" width="1" height="3" fill="#bdc1c6"/>
<rect x="1078.2" y="266" width="1" height="3" fill="#bdc1c6"/>
<rect x="1088.0" y="266" width="1" height="3" fill="#bdc1c6"/>
<text x="1098.3" y="271.5" font-size="12.5" fill="#3c4043" text-anchor="middle" font-family="Liberation Sans">7</text>
<rect x="1107.7" y="266" width="1" height="3" fill="#bdc1c6"/>
<rect x="1117.5" y="266" width="1" height="3" fill="#bdc1c6"/>
<rect x="1127.3" y="266" width="1" height="3" fill="#bdc1c6"/>
<rect x="1137.2" y="263" width="1" height="9" fill="#9aa0a6"/>
<rect x="1147.0" y="266" width="1" height="3" fill="#bdc1c6"/>
<rect x="1156.8" y="266" width="1" height="3" fill="#bdc1c6"/>
<rect x="1166.7" y="266" width="1" height="3" fill="#bdc1c6"/>
<text x="1177.0" y="271.5" font-size="12.5" fill="#3c4043" text-anchor="middle" font-family="Liberation Sans">8</text>
<rect x="1186.4" y="266" width="1" height="3" fill="#bdc1c6"/>
<rect x="1196.2" y="266" width="1" height="3" fill="#bdc1c6"/>
<rect x="1206.0" y="266" width="1" height="3" fill="#bdc1c6"/>
<rect x="1215.9" y="263" width="1" height="9" fill="#9aa0a6"/>
<rect x="1225.7" y="266" width="1" height="3" fill="#bdc1c6"/>
<rect x="1235.5" y="266" width="1" height="3" fill="#bdc1c6"/>
<rect x="1245.4" y="266" width="1" height="3" fill="#bdc1c6"/>
<text x="1255.7" y="271.5" font-size="12.5" fill="#3c4043" text-anchor="middle" font-family="Liberation Sans">9</text>
<rect x="1265.0" y="266" width="1" height="3" fill="#bdc1c6"/>
<rect x="1274.9" y="266" width="1" height="3" fill="#bdc1c6"/>
<rect x="1284.7" y="266" width="1" height="3" fill="#bdc1c6"/>
<rect x="1294.6" y="263" width="1" height="9" fill="#9aa0a6"/>
<rect x="1304.4" y="266" width="1" height="3" fill="#bdc1c6"/>
<rect x="1314.2" y="266" width="1" height="3" fill="#bdc1c6"/>
<rect x="1324.1" y="266" width="1" height="3" fill="#bdc1c6"/>
<text x="1334.4" y="271.5" font-size="12.5" fill="#3c4043" text-anchor="middle" font-family="Liberation Sans">10</text>
<rect x="1343.7" y="266" width="1" height="3" fill="#bdc1c6"/>
<rect x="1353.6" y="266" width="1" height="3" fill="#bdc1c6"/>
<rect x="1363.4" y="266" width="1" height="3" fill="#bdc1c6"/>
<rect x="1373.2" y="263" width="1" height="9" fill="#9aa0a6"/>
<rect x="1383.1" y="266" width="1" height="3" fill="#bdc1c6"/>
<rect x="1392.9" y="266" width="1" height="3" fill="#bdc1c6"/>
<rect x="1402.8" y="266" width="1" height="3" fill="#bdc1c6"/>
<text x="1413.1" y="271.5" font-size="12.5" fill="#3c4043" text-anchor="middle" font-family="Liberation Sans">11</text>
<rect x="1422.4" y="266" width="1" height="3" fill="#bdc1c6"/>
<rect x="1432.3" y="266" width="1" height="3" fill="#bdc1c6"/>
<rect x="1442.1" y="266" width="1" height="3" fill="#bdc1c6"/>
<rect x="1451.9" y="263" width="1" height="9" fill="#9aa0a6"/>
<rect x="1461.8" y="266" width="1" height="3" fill="#bdc1c6"/>
<rect x="1471.6" y="266" width="1" height="3" fill="#bdc1c6"/>
<rect x="1481.4" y="266" width="1" height="3" fill="#bdc1c6"/>
<text x="1491.8" y="271.5" font-size="12.5" fill="#3c4043" text-anchor="middle" font-family="Liberation Sans">12</text>
<rect x="1501.1" y="266" width="1" height="3" fill="#bdc1c6"/>
<rect x="1511.0" y="266" width="1" height="3" fill="#bdc1c6"/>
<rect x="1520.8" y="266" width="1" height="3" fill="#bdc1c6"/>
<rect x="1530.6" y="263" width="1" height="9" fill="#9aa0a6"/>
<rect x="1540.5" y="266" width="1" height="3" fill="#bdc1c6"/>
<rect x="1550.3" y="266" width="1" height="3" fill="#bdc1c6"/>
<rect x="1560.1" y="266" width="1" height="3" fill="#bdc1c6"/>
<text x="1570.5" y="271.5" font-size="12.5" fill="#3c4043" text-anchor="middle" font-family="Liberation Sans">13</text>
<rect x="1579.8" y="266" width="1" height="3" fill="#bdc1c6"/>
<rect x="1589.6" y="266" width="1" height="3" fill="#bdc1c6"/>
<rect x="282" y="308.8" width="3" height="1" fill="#bdc1c6"/>
<rect x="282" y="318.7" width="3" height="1" fill="#bdc1c6"/>
<rect x="282" y="328.5" width="3" height="1" fill="#bdc1c6"/>
<rect x="279" y="338.3" width="9" height="1" fill="#9aa0a6"/>
<rect x="282" y="348.2" width="3" height="1" fill="#bdc1c6"/>
<rect x="282" y="358.0" width="3" height="1" fill="#bdc1c6"/>
<rect x="282" y="367.9" width="3" height="1" fill="#bdc1c6"/>
<text x="0" y="0" font-size="12.5" fill="#3c4043" text-anchor="middle" font-family="Liberation Sans" transform="translate(287.5,378.2) rotate(-90)">1</text>
<rect x="282" y="387.5" width="3" height="1" fill="#bdc1c6"/>
<rect x="282" y="397.4" width="3" height="1" fill="#bdc1c6"/>
<rect x="282" y="407.2" width="3" height="1" fill="#bdc1c6"/>
<rect x="279" y="417.0" width="9" height="1" fill="#9aa0a6"/>
<rect x="282" y="426.9" width="3" height="1" fill="#bdc1c6"/>
<rect x="282" y="436.7" width="3" height="1" fill="#bdc1c6"/>
<rect x="282" y="446.5" width="3" height="1" fill="#bdc1c6"/>
<text x="0" y="0" font-size="12.5" fill="#3c4043" text-anchor="middle" font-family="Liberation Sans" transform="translate(287.5,456.9) rotate(-90)">2</text>
<rect x="282" y="466.2" width="3" height="1" fill="#bdc1c6"/>
<rect x="282" y="476.1" width="3" height="1" fill="#bdc1c6"/>
<rect x="282" y="485.9" width="3" height="1" fill="#bdc1c6"/>
<rect x="279" y="495.7" width="9" height="1" fill="#9aa0a6"/>
<rect x="282" y="505.6" width="3" height="1" fill="#bdc1c6"/>
<rect x="282" y="515.4" width="3" height="1" fill="#bdc1c6"/>
<rect x="282" y="525.2" width="3" height="1" fill="#bdc1c6"/>
<text x="0" y="0" font-size="12.5" fill="#3c4043" text-anchor="middle" font-family="Liberation Sans" transform="translate(287.5,535.6) rotate(-90)">3</text>
<rect x="282" y="544.9" width="3" height="1" fill="#bdc1c6"/>
<rect x="282" y="554.7" width="3" height="1" fill="#bdc1c6"/>
<rect x="282" y="564.6" width="3" height="1" fill="#bdc1c6"/>
<rect x="279" y="574.4" width="9" height="1" fill="#9aa0a6"/>
<rect x="282" y="584.3" width="3" height="1" fill="#bdc1c6"/>
<rect x="282" y="594.1" width="3" height="1" fill="#bdc1c6"/>
<rect x="282" y="603.9" width="3" height="1" fill="#bdc1c6"/>
<text x="0" y="0" font-size="12.5" fill="#3c4043" text-anchor="middle" font-family="Liberation Sans" transform="translate(287.5,614.3) rotate(-90)">4</text>
<rect x="282" y="623.6" width="3" height="1" fill="#bdc1c6"/>
<rect x="282" y="633.4" width="3" height="1" fill="#bdc1c6"/>
<rect x="282" y="643.3" width="3" height="1" fill="#bdc1c6"/>
<rect x="279" y="653.1" width="9" height="1" fill="#9aa0a6"/>
<rect x="282" y="662.9" width="3" height="1" fill="#bdc1c6"/>
<rect x="282" y="672.8" width="3" height="1" fill="#bdc1c6"/>
<rect x="282" y="682.6" width="3" height="1" fill="#bdc1c6"/>
<text x="0" y="0" font-size="12.5" fill="#3c4043" text-anchor="middle" font-family="Liberation Sans" transform="translate(287.5,693.0) rotate(-90)">5</text>
<rect x="282" y="702.3" width="3" height="1" fill="#bdc1c6"/>
<rect x="282" y="712.1" width="3" height="1" fill="#bdc1c6"/>
<rect x="282" y="722.0" width="3" height="1" fill="#bdc1c6"/>
<rect x="279" y="731.8" width="9" height="1" fill="#9aa0a6"/>
<rect x="282" y="741.6" width="3" height="1" fill="#bdc1c6"/>
<rect x="282" y="751.5" width="3" height="1" fill="#bdc1c6"/>
<rect x="282" y="761.3" width="3" height="1" fill="#bdc1c6"/>
<text x="0" y="0" font-size="12.5" fill="#3c4043" text-anchor="middle" font-family="Liberation Sans" transform="translate(287.5,771.6) rotate(-90)">6</text>
<rect x="282" y="781.0" width="3" height="1" fill="#bdc1c6"/>
<rect x="282" y="790.8" width="3" height="1" fill="#bdc1c6"/>
<rect x="282" y="800.6" width="3" height="1" fill="#bdc1c6"/>
<rect x="279" y="810.5" width="9" height="1" fill="#9aa0a6"/>
<rect x="282" y="820.3" width="3" height="1" fill="#bdc1c6"/>
<rect x="282" y="830.2" width="3" height="1" fill="#bdc1c6"/>
<rect x="282" y="840.0" width="3" height="1" fill="#bdc1c6"/>
<text x="0" y="0" font-size="12.5" fill="#3c4043" text-anchor="middle" font-family="Liberation Sans" transform="translate(287.5,850.3) rotate(-90)">7</text>
<rect x="282" y="859.7" width="3" height="1" fill="#bdc1c6"/>
<rect x="282" y="869.5" width="3" height="1" fill="#bdc1c6"/>
<rect x="282" y="879.3" width="3" height="1" fill="#bdc1c6"/>
</svg><div class="a" style="left:548px;top:300px;width:1048px;height:589px;background:#fff;border:20px solid #e25323"></div>
<div class="t" style="left:653px;top:380px;font-size:78px;color:#e25323;font-family:'Liberation Serif'">7.</div>
<div class="t" style="left:653px;top:476px;font-size:53px;color:#e25323;line-height:66px;font-family:'Liberation Serif'">When I want a book, it's a short walk<br>to the library.</div><div class="a" style="left:275px;top:909px;width:1575px;height:1px;background:#dadce0"></div>
<div class="a" style="left:275px;top:910px;width:1575px;height:110px;background:#fff"></div>
<div class="a" style="left:275px;top:920px;width:1575px;height:1px;background:#dadce0"></div>
<div class="a" style="left:1050px;top:913px;width:4px;height:4px;background:#bdc1c6;border-radius:1px"></div>
<div class="a" style="left:1060px;top:913px;width:4px;height:4px;background:#bdc1c6;border-radius:1px"></div>
<div class="a" style="left:1071px;top:913px;width:4px;height:4px;background:#bdc1c6;border-radius:1px"></div>
<div class="t" style="left:295px;top:937px;font-size:18.2px;color:#202124">Click to add speaker notes</div><div class="a" style="left:1850px;top:210px;width:70px;height:810px;background:#fff;border-left:1px solid #dadce0"></div>
<svg style="left:1874px;top:233px" width="25" height="25" viewBox="0 0 25 25"><rect width="25" height="25" rx="3" fill="#fbbc04"/><circle cx="12.5" cy="10.5" r="5" fill="#fff"/><rect x="10" y="13" width="5" height="4" fill="#fff"/><rect x="10.5" y="18" width="4" height="1.5" fill="#fff"/></svg>
<svg style="left:1875px;top:304px" width="24" height="24" viewBox="0 0 24 24"><circle cx="12" cy="12" r="12" fill="#4285f4"/><path d="M9 16.5L17 8.5" stroke="#fff" stroke-width="2.5"/><circle cx="6.8" cy="12.8" r="1.8" fill="#fbbc04"/></svg><div class="a" style="left:1461px;top:589px;width:450px;height:423px;background:#fff;box-shadow:0 2px 6px rgba(0,0,0,.3)"></div>
<div class="a" style="left:1485px;top:605px;width:16px;height:16px;border:2px solid #1a73e8"></div>
<div class="a" style="left:1511px;top:609px;width:100px;height:9px;background:#8ab4f8"></div>
<div class="a" style="left:1633px;top:609px;width:28px;height:9px;background:#9aa0a6"></div>
<div class="a" style="left:1481px;top:641px;width:125px;height:11px;background:#9aa0a6"></div>
<div class="a" style="left:1481px;top:666px;width:102px;height:11px;background:#c4c7c5"></div>
<div class="a" style="left:1481px;top:702px;width:410px;height:185px;background:#f8f9fa;overflow:hidden">
<div class="a" style="left:0;top:0;width:410px;height:9px;background:#dee1e6"></div>
<div class="a" style="left:38px;top:10px;width:350px;height:7px;background:#f1f3f4;border-radius:4px"></div>
<div class="a" style="left:0;top:27px;width:410px;height:29px;background:#fff"></div>
<div class="a" style="left:368px;top:36px;width:23px;height:10px;background:#fbbc04"></div>
<div class="a" style="left:0;top:55px;width:58px;height:130px;background:#fff"></div>
<div class="a" style="left:117px;top:64px;width:224px;height:126px;border:4px solid #df5327;background:#fff"></div>
<div class="a" style="left:140px;top:85px;width:8px;height:8px;background:#e8a48e"></div>
<div class="a" style="left:140px;top:102px;width:170px;height:5px;background:#eeb7a5"></div>
<div class="a" style="left:140px;top:116px;width:60px;height:5px;background:#eeb7a5"></div>
<div class="a" style="left:12px;top:80px;width:40px;height:22px;border:1px solid #df5327"></div>
<div class="a" style="left:12px;top:107px;width:40px;height:22px;border:1px solid #df5327"></div>
<div class="a" style="left:12px;top:134px;width:40px;height:22px;border:1px solid #df5327"></div>
<div class="a" style="left:12px;top:161px;width:40px;height:22px;border:1px solid #df5327"></div>
</div>
<div class="a" style="left:1481px;top:887px;width:410px;height:45px;background:#1a73e8"></div></div></div>
<div class="a" style="left:1481px;top:887px;width:410px;height:45px;background:#1a73e8"></div>
<svg style="left:1495px;top:898px" width="26" height="24" viewBox="0 0 26 24"><path d="M8 3H4a1.5 1.5 0 0 0-1.5 1.5V21A1.5 1.5 0 0 0 4 22.5H11M18 3h4a1.5 1.5 0 0 1 1.5 1.5V11" fill="none" stroke="#fff" stroke-width="2"/><rect x="8" y="1" width="10" height="4" rx="1" fill="none" stroke="#fff" stroke-width="2"/><path d="M14 18L17.5 21.5L24.5 14.5" fill="none" stroke="#fff" stroke-width="2"/></svg>
<div class="t" style="left:1531px;top:902px;font-size:15px;color:#fff">Copied to clipboard</div>
<div class="t" style="left:1491px;top:975px;font-size:14px;color:#2f6cc7;-webkit-text-stroke:0.45px #2f6cc7">EDIT</div>
<div class="t" style="left:1574px;top:975px;font-size:14px;color:#2f6cc7;-webkit-text-stroke:0.45px #2f6cc7">DELETE</div>
<div class="a" style="left:0;top:1020px;width:1920px;height:60px;background:#1c202b"></div>
<div class="a" style="left:8px;top:1028px;width:45px;height:45px;border-radius:50%;background:#2d323d"></div>
<div class="a" style="left:21.5px;top:1041.5px;width:18px;height:18px;border-radius:50%;border:2px solid #fff"></div>
<svg style="left:941px;top:1028px" width="42" height="42" viewBox="0 0 42 42">
<circle cx="21" cy="21" r="21" fill="#15181f"/>
<path d="M21 12L38.86 12A20 20 0 0 0 4.28 10.03L13.21 25.5Z" fill="#ea4335"/>
<path d="M28.79 25.5L19.86 40.97A20 20 0 0 0 38.86 12L21 12Z" fill="#fbbc04"/>
<path d="M13.21 25.5L4.28 10.03A20 20 0 0 0 19.86 40.97L28.79 25.5Z" fill="#34a853"/>
<circle cx="21" cy="21" r="9.2" fill="#fff"/>
<circle cx="21" cy="21" r="7.4" fill="#4285f4"/>
</svg>
<div class="a" style="left:956px;top:1075px;width:12px;height:2px;background:#e8eaed;border-radius:1px"></div>
<div class="a" style="left:1518.5px;top:1027.5px;width:84.5px;height:50.5px;border-radius:25px;background:#2a2f38"></div>
<div class="a" style="left:1521.5px;top:1032.5px;width:40px;height:40.5px;border-radius:50%;background:#fdfdfd"></div>
<div class="a" style="left:1541px;top:1032.5px;width:40px;height:40.5px;border-radius:50%;background:#fdfdfd"></div>
<div class="a" style="left:1560.5px;top:1032.5px;width:40px;height:40.5px;border-radius:50%;background:#fdfdfd"></div>
<div class="a" style="left:1521.5px;top:1032.5px;width:79px;height:40.5px;overflow:hidden;-webkit-mask-image:radial-gradient(circle at 20px 20.25px,#000 20px,transparent 20.5px),radial-gradient(circle at 39.5px 20.25px,#000 20px,transparent 20.5px),radial-gradient(circle at 59px 20.25px,#000 20px,transparent 20.5px)"><div class="a" style="left:0;top:9px;width:79px;height:1.5px;background:#d59a80"></div><div class="a" style="left:0;top:35.8px;width:79px;height:1.5px;background:#e8925f"></div><div class="a" style="left:5px;top:21px;width:70px;height:1px;background:#f0d5ca"></div><div class="a" style="left:5px;top:25px;width:20px;height:1px;background:#f0d5ca"></div></div>
<div class="a" style="left:1616px;top:1031px;width:105px;height:44px;border-radius:5px;background:#f28b82"></div>
<div class="t" style="left:1636px;top:1045px;font-size:17.5px;color:#fce8e6">Sign out</div>
<div class="a" style="left:1733px;top:1028px;width:181px;height:50px;border-radius:25px;background:#2d323d"></div>
<div class="t" style="left:1748px;top:1046px;font-size:17.5px;color:#e8eaed">US</div>
<div class="a" style="left:1780px;top:1041.5px;width:21px;height:21px;border-radius:50%;background:#e8eaed"></div>
<div class="t" style="left:1786px;top:1045px;font-size:14.5px;color:#1c202b;font-weight:bold">2</div>
<svg style="left:1810px;top:1044px" width="21" height="16" viewBox="0 0 21 16"><path d="M10.5 16L0 3.5A16 16 0 0 1 21 3.5Z" fill="#e8eaed"/></svg>
<div class="a" style="left:1842px;top:1045px;width:11px;height:16px;background:#e8eaed;border-radius:1.5px"></div>
<div class="a" style="left:1845px;top:1043px;width:5px;height:3px;background:#e8eaed"></div>
<div class="t" style="left:1863px;top:1046px;font-size:17.5px;color:#e8eaed">5:27</div>
</body></html>
